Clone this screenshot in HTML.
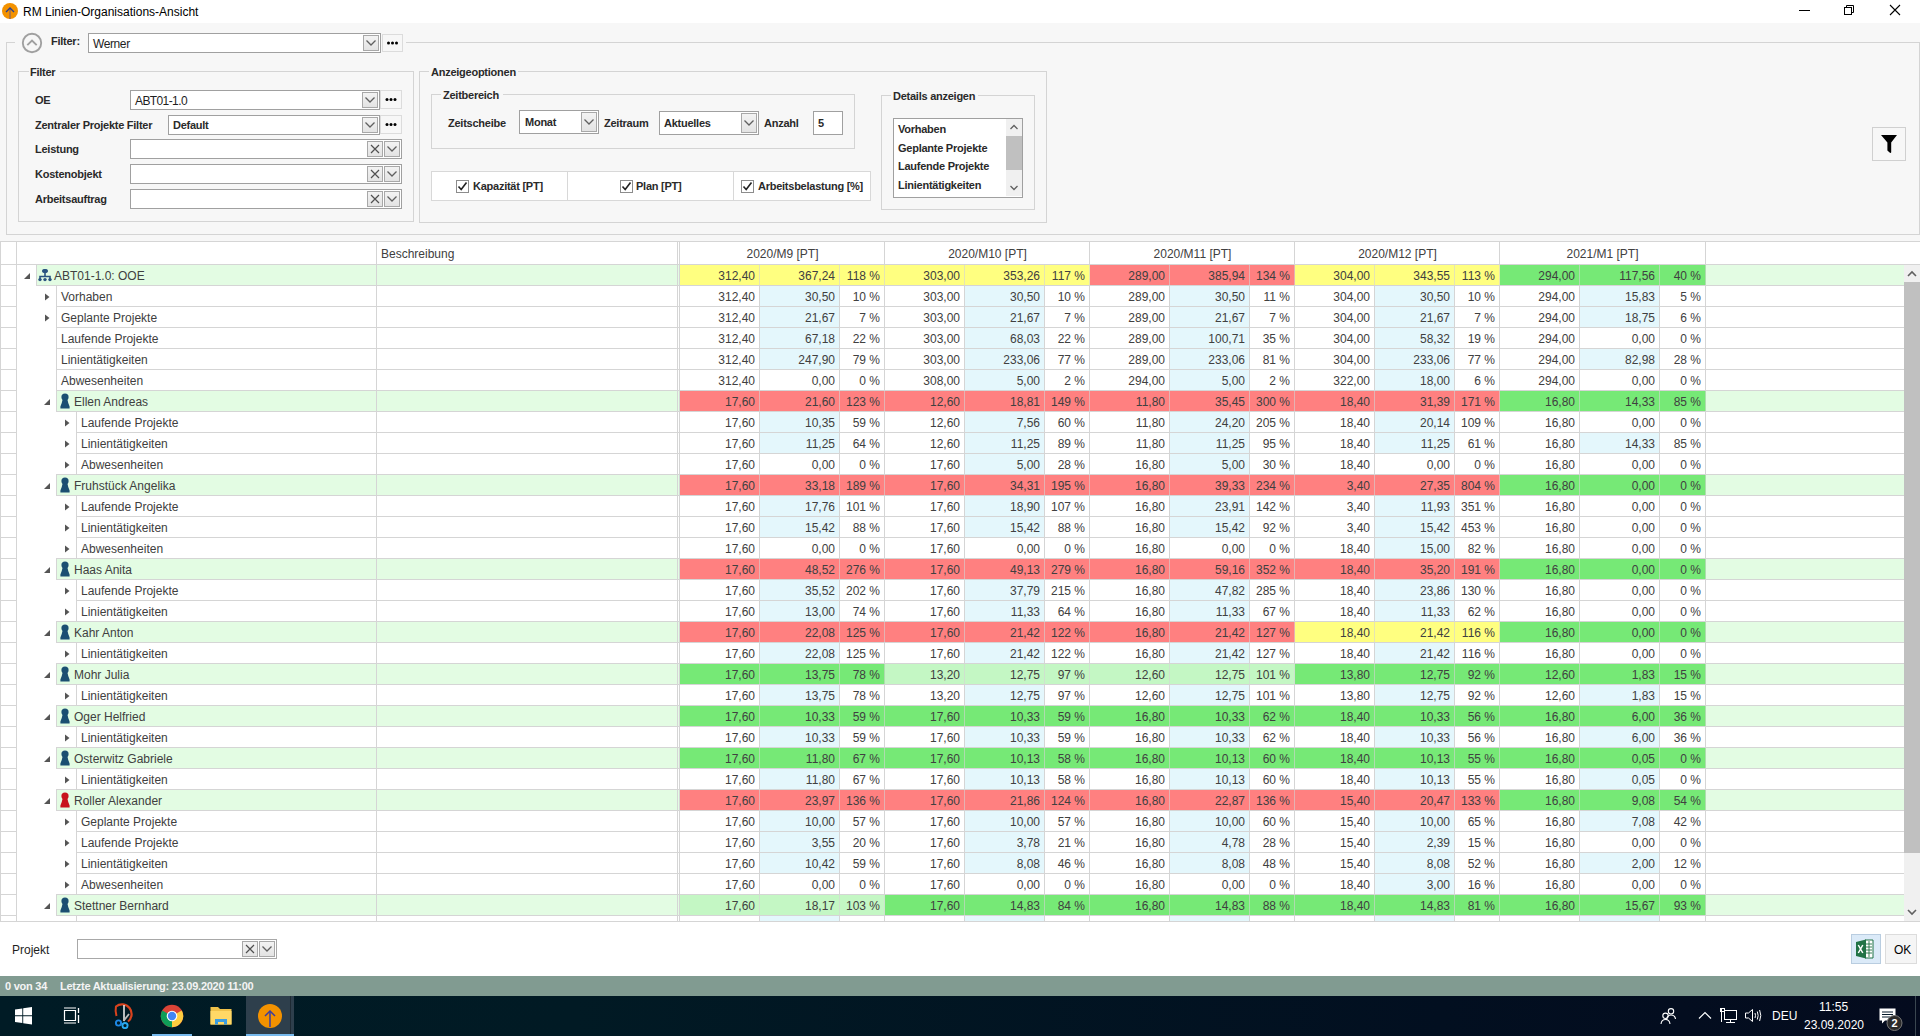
<!DOCTYPE html>
<html><head><meta charset="utf-8"><style>
html,body{margin:0;padding:0;width:1920px;height:1036px;overflow:hidden;background:#fff;}
body{position:relative;font-family:"Liberation Sans",sans-serif;}
div{position:absolute;}
.t{white-space:nowrap;}
</style></head><body>
<div style="left:0px;top:0px;width:1920px;height:23px;background:#fff"></div>
<svg style="position:absolute;left:2px;top:3px" width="16" height="16" viewBox="0 0 16 16"><circle cx="8" cy="8" r="8" fill="#f39200"/><path d="M8 5 L8 16" stroke="#b5763a" stroke-width="2"/><path d="M4 9 L8 5 L12 9" stroke="#2a3f8f" stroke-width="1.4" fill="none"/></svg>
<div class="t" style="left:23px;top:6px;font-size:12px;line-height:12px;color:#000;">RM Linien-Organisations-Ansicht</div>
<div style="left:1799px;top:10px;width:11px;height:1px;background:#000"></div>
<svg style="position:absolute;left:1843px;top:4px" width="13" height="12" viewBox="0 0 13 12"><rect x="1.5" y="3.5" width="7" height="7" fill="none" stroke="#000"/><path d="M3.5 3.5 V1.5 H10.5 V8.5 H8.5" fill="none" stroke="#000"/></svg>
<svg style="position:absolute;left:1889px;top:4px" width="13" height="13" viewBox="0 0 13 13"><path d="M1 1 L11 11 M11 1 L1 11" stroke="#000" stroke-width="1.1"/></svg>
<div style="left:0px;top:23px;width:1920px;height:218px;background:#f7f7f7"></div>
<div style="left:6px;top:42px;width:9px;height:1px;background:#d4d4d4"></div>
<div style="left:406px;top:42px;width:1514px;height:1px;background:#d4d4d4"></div>
<div style="left:6px;top:42px;width:1px;height:193px;background:#d4d4d4"></div>
<div style="left:1919px;top:42px;width:1px;height:193px;background:#d4d4d4"></div>
<div style="left:6px;top:234px;width:1914px;height:1px;background:#d4d4d4"></div>
<svg style="position:absolute;left:21px;top:32px" width="22" height="22" viewBox="0 0 22 22"><circle cx="11" cy="11" r="9.2" fill="none" stroke="#a0a0a0" stroke-width="1.9"/><path d="M6.3 13.2 L11 8.5 L15.7 13.2" fill="none" stroke="#a0a0a0" stroke-width="1.9"/></svg>
<div class="t" style="left:51px;top:36px;font-size:11px;line-height:11px;font-weight:bold;letter-spacing:-0.25px;color:#2a2a2a;">Filter:</div>
<div style="left:88px;top:33px;width:293px;height:20px;border:1px solid #a0a0a0;box-sizing:border-box;background:#fff;"></div>
<div style="left:363px;top:35px;width:16px;height:16px;border:1px solid #a8a8a8;box-sizing:border-box;background:linear-gradient(#f3f3f3,#e3e3e3);"></div>
<svg style="position:absolute;left:363px;top:35px" width="16" height="16" viewBox="0 0 16 16"><path d="M3.5 5.5 L8.0 10.0 L12.5 5.5" fill="none" stroke="#606060" stroke-width="1.3"/></svg>
<div class="t" style="left:93px;top:38px;font-size:12px;line-height:12px;color:#1e1e1e;letter-spacing:-0.4px;">Werner</div>
<div style="left:382px;top:34px;width:21px;height:18px;border:1px solid #dcdcdc;box-sizing:border-box;background:#f7f7f7;"></div>
<svg style="position:absolute;left:382px;top:34px" width="21" height="18" viewBox="0 0 21 18"><circle cx="6.5" cy="9.0" r="1.5" fill="#000"/><circle cx="10.5" cy="9.0" r="1.5" fill="#000"/><circle cx="14.5" cy="9.0" r="1.5" fill="#000"/></svg>
<div style="left:18px;top:71px;width:11px;height:1px;background:#d4d4d4"></div>
<div style="left:60px;top:71px;width:354px;height:1px;background:#d4d4d4"></div>
<div style="left:18px;top:71px;width:1px;height:151px;background:#d4d4d4"></div>
<div style="left:413px;top:71px;width:1px;height:151px;background:#d4d4d4"></div>
<div style="left:18px;top:221px;width:396px;height:1px;background:#d4d4d4"></div>
<div class="t" style="left:30px;top:67px;font-size:11px;line-height:11px;font-weight:bold;letter-spacing:-0.25px;color:#2a2a2a;">Filter</div>
<div class="t" style="left:35px;top:95px;font-size:11px;line-height:11px;font-weight:bold;letter-spacing:-0.25px;color:#2a2a2a;">OE</div>
<div class="t" style="left:35px;top:120px;font-size:11px;line-height:11px;font-weight:bold;letter-spacing:-0.25px;color:#2a2a2a;">Zentraler Projekte Filter</div>
<div class="t" style="left:35px;top:144px;font-size:11px;line-height:11px;font-weight:bold;letter-spacing:-0.25px;color:#2a2a2a;">Leistung</div>
<div class="t" style="left:35px;top:169px;font-size:11px;line-height:11px;font-weight:bold;letter-spacing:-0.25px;color:#2a2a2a;">Kostenobjekt</div>
<div class="t" style="left:35px;top:194px;font-size:11px;line-height:11px;font-weight:bold;letter-spacing:-0.25px;color:#2a2a2a;">Arbeitsauftrag</div>
<div style="left:130px;top:90px;width:250px;height:20px;border:1px solid #a0a0a0;box-sizing:border-box;background:#fff;"></div>
<div style="left:362px;top:92px;width:16px;height:16px;border:1px solid #a8a8a8;box-sizing:border-box;background:linear-gradient(#f3f3f3,#e3e3e3);"></div>
<svg style="position:absolute;left:362px;top:92px" width="16" height="16" viewBox="0 0 16 16"><path d="M3.5 5.5 L8.0 10.0 L12.5 5.5" fill="none" stroke="#606060" stroke-width="1.3"/></svg>
<div class="t" style="left:135px;top:95px;font-size:12px;line-height:12px;color:#1e1e1e;letter-spacing:-0.6px;">ABT01-1.0</div>
<div style="left:380px;top:90px;width:22px;height:19px;border:1px solid #dcdcdc;box-sizing:border-box;background:#f7f7f7;"></div>
<svg style="position:absolute;left:380px;top:90px" width="22" height="19" viewBox="0 0 22 19"><circle cx="7.0" cy="9.5" r="1.5" fill="#000"/><circle cx="11.0" cy="9.5" r="1.5" fill="#000"/><circle cx="15.0" cy="9.5" r="1.5" fill="#000"/></svg>
<div style="left:168px;top:115px;width:212px;height:20px;border:1px solid #a0a0a0;box-sizing:border-box;background:#fff;"></div>
<div style="left:362px;top:117px;width:16px;height:16px;border:1px solid #a8a8a8;box-sizing:border-box;background:linear-gradient(#f3f3f3,#e3e3e3);"></div>
<svg style="position:absolute;left:362px;top:117px" width="16" height="16" viewBox="0 0 16 16"><path d="M3.5 5.5 L8.0 10.0 L12.5 5.5" fill="none" stroke="#606060" stroke-width="1.3"/></svg>
<div class="t" style="left:173px;top:120px;font-size:11px;line-height:11px;font-weight:bold;letter-spacing:-0.25px;color:#2a2a2a;">Default</div>
<div style="left:380px;top:115px;width:22px;height:19px;border:1px solid #dcdcdc;box-sizing:border-box;background:#f7f7f7;"></div>
<svg style="position:absolute;left:380px;top:115px" width="22" height="19" viewBox="0 0 22 19"><circle cx="7.0" cy="9.5" r="1.5" fill="#000"/><circle cx="11.0" cy="9.5" r="1.5" fill="#000"/><circle cx="15.0" cy="9.5" r="1.5" fill="#000"/></svg>
<div style="left:130px;top:139px;width:272px;height:20px;border:1px solid #a0a0a0;box-sizing:border-box;background:#fff;"></div>
<div style="left:367px;top:141px;width:16px;height:16px;border:1px solid #a8a8a8;box-sizing:border-box;background:linear-gradient(#f3f3f3,#e3e3e3);"></div>
<svg style="position:absolute;left:367px;top:141px" width="16" height="16" viewBox="0 0 16 16"><path d="M4.0 4.0 L12.0 12.0 M12.0 4.0 L4.0 12.0" fill="none" stroke="#505050" stroke-width="1.2"/></svg>
<div style="left:384px;top:141px;width:16px;height:16px;border:1px solid #a8a8a8;box-sizing:border-box;background:linear-gradient(#f3f3f3,#e3e3e3);"></div>
<svg style="position:absolute;left:384px;top:141px" width="16" height="16" viewBox="0 0 16 16"><path d="M3.5 5.5 L8.0 10.0 L12.5 5.5" fill="none" stroke="#606060" stroke-width="1.3"/></svg>
<div style="left:130px;top:164px;width:272px;height:20px;border:1px solid #a0a0a0;box-sizing:border-box;background:#fff;"></div>
<div style="left:367px;top:166px;width:16px;height:16px;border:1px solid #a8a8a8;box-sizing:border-box;background:linear-gradient(#f3f3f3,#e3e3e3);"></div>
<svg style="position:absolute;left:367px;top:166px" width="16" height="16" viewBox="0 0 16 16"><path d="M4.0 4.0 L12.0 12.0 M12.0 4.0 L4.0 12.0" fill="none" stroke="#505050" stroke-width="1.2"/></svg>
<div style="left:384px;top:166px;width:16px;height:16px;border:1px solid #a8a8a8;box-sizing:border-box;background:linear-gradient(#f3f3f3,#e3e3e3);"></div>
<svg style="position:absolute;left:384px;top:166px" width="16" height="16" viewBox="0 0 16 16"><path d="M3.5 5.5 L8.0 10.0 L12.5 5.5" fill="none" stroke="#606060" stroke-width="1.3"/></svg>
<div style="left:130px;top:189px;width:272px;height:20px;border:1px solid #a0a0a0;box-sizing:border-box;background:#fff;"></div>
<div style="left:367px;top:191px;width:16px;height:16px;border:1px solid #a8a8a8;box-sizing:border-box;background:linear-gradient(#f3f3f3,#e3e3e3);"></div>
<svg style="position:absolute;left:367px;top:191px" width="16" height="16" viewBox="0 0 16 16"><path d="M4.0 4.0 L12.0 12.0 M12.0 4.0 L4.0 12.0" fill="none" stroke="#505050" stroke-width="1.2"/></svg>
<div style="left:384px;top:191px;width:16px;height:16px;border:1px solid #a8a8a8;box-sizing:border-box;background:linear-gradient(#f3f3f3,#e3e3e3);"></div>
<svg style="position:absolute;left:384px;top:191px" width="16" height="16" viewBox="0 0 16 16"><path d="M3.5 5.5 L8.0 10.0 L12.5 5.5" fill="none" stroke="#606060" stroke-width="1.3"/></svg>
<div style="left:419px;top:71px;width:10px;height:1px;background:#d4d4d4"></div>
<div style="left:518px;top:71px;width:529px;height:1px;background:#d4d4d4"></div>
<div style="left:419px;top:71px;width:1px;height:152px;background:#d4d4d4"></div>
<div style="left:1046px;top:71px;width:1px;height:152px;background:#d4d4d4"></div>
<div style="left:419px;top:222px;width:628px;height:1px;background:#d4d4d4"></div>
<div class="t" style="left:431px;top:67px;font-size:11px;line-height:11px;font-weight:bold;letter-spacing:-0.25px;color:#2a2a2a;">Anzeigeoptionen</div>
<div style="left:431px;top:94px;width:10px;height:1px;background:#d4d4d4"></div>
<div style="left:503px;top:94px;width:352px;height:1px;background:#d4d4d4"></div>
<div style="left:431px;top:94px;width:1px;height:55px;background:#d4d4d4"></div>
<div style="left:854px;top:94px;width:1px;height:55px;background:#d4d4d4"></div>
<div style="left:431px;top:148px;width:424px;height:1px;background:#d4d4d4"></div>
<div class="t" style="left:443px;top:90px;font-size:11px;line-height:11px;font-weight:bold;letter-spacing:-0.25px;color:#2a2a2a;">Zeitbereich</div>
<div class="t" style="left:448px;top:118px;font-size:11px;line-height:11px;font-weight:bold;letter-spacing:-0.25px;color:#2a2a2a;">Zeitscheibe</div>
<div style="left:519px;top:110px;width:80px;height:24px;border:1px solid #a0a0a0;box-sizing:border-box;background:#fff;"></div>
<div style="left:581px;top:112px;width:16px;height:20px;border:1px solid #a8a8a8;box-sizing:border-box;background:linear-gradient(#f3f3f3,#e3e3e3);"></div>
<svg style="position:absolute;left:581px;top:112px" width="16" height="20" viewBox="0 0 16 20"><path d="M3.5 7.5 L8.0 12.0 L12.5 7.5" fill="none" stroke="#606060" stroke-width="1.3"/></svg>
<div class="t" style="left:525px;top:117px;font-size:11px;line-height:11px;font-weight:bold;letter-spacing:-0.25px;color:#2a2a2a;">Monat</div>
<div class="t" style="left:604px;top:118px;font-size:11px;line-height:11px;font-weight:bold;letter-spacing:-0.25px;color:#2a2a2a;">Zeitraum</div>
<div style="left:659px;top:111px;width:100px;height:24px;border:1px solid #a0a0a0;box-sizing:border-box;background:#fff;"></div>
<div style="left:741px;top:113px;width:16px;height:20px;border:1px solid #a8a8a8;box-sizing:border-box;background:linear-gradient(#f3f3f3,#e3e3e3);"></div>
<svg style="position:absolute;left:741px;top:113px" width="16" height="20" viewBox="0 0 16 20"><path d="M3.5 7.5 L8.0 12.0 L12.5 7.5" fill="none" stroke="#606060" stroke-width="1.3"/></svg>
<div class="t" style="left:664px;top:118px;font-size:11px;line-height:11px;font-weight:bold;letter-spacing:-0.25px;color:#2a2a2a;">Aktuelles</div>
<div class="t" style="left:764px;top:118px;font-size:11px;line-height:11px;font-weight:bold;letter-spacing:-0.25px;color:#2a2a2a;">Anzahl</div>
<div style="left:813px;top:111px;width:30px;height:24px;border:1px solid #a0a0a0;box-sizing:border-box;background:#fff;"></div>
<div class="t" style="left:818px;top:118px;font-size:11px;line-height:11px;font-weight:bold;letter-spacing:-0.25px;color:#2a2a2a;">5</div>
<div style="left:431px;top:171px;width:440px;height:30px;border:1px solid #d8d8d8;box-sizing:border-box;background:#fff;"></div>
<div style="left:567px;top:172px;width:1px;height:28px;background:#d8d8d8"></div>
<div style="left:733px;top:172px;width:1px;height:28px;background:#d8d8d8"></div>
<div style="left:456px;top:180px;width:13px;height:13px;border:1px solid #8c8c8c;box-sizing:border-box;background:#fff;"></div>
<svg style="position:absolute;left:456px;top:180px" width="13" height="13" viewBox="0 0 13 13"><path d="M2.5 6.5 L5.2 9.5 L10.5 2.5" fill="none" stroke="#222" stroke-width="1.6"/></svg>
<div class="t" style="left:473px;top:181px;font-size:11px;line-height:11px;font-weight:bold;letter-spacing:-0.25px;color:#2a2a2a;">Kapazität [PT]</div>
<div style="left:620px;top:180px;width:13px;height:13px;border:1px solid #8c8c8c;box-sizing:border-box;background:#fff;"></div>
<svg style="position:absolute;left:620px;top:180px" width="13" height="13" viewBox="0 0 13 13"><path d="M2.5 6.5 L5.2 9.5 L10.5 2.5" fill="none" stroke="#222" stroke-width="1.6"/></svg>
<div class="t" style="left:636px;top:181px;font-size:11px;line-height:11px;font-weight:bold;letter-spacing:-0.25px;color:#2a2a2a;">Plan [PT]</div>
<div style="left:741px;top:180px;width:13px;height:13px;border:1px solid #8c8c8c;box-sizing:border-box;background:#fff;"></div>
<svg style="position:absolute;left:741px;top:180px" width="13" height="13" viewBox="0 0 13 13"><path d="M2.5 6.5 L5.2 9.5 L10.5 2.5" fill="none" stroke="#222" stroke-width="1.6"/></svg>
<div class="t" style="left:758px;top:181px;font-size:11px;line-height:11px;font-weight:bold;letter-spacing:-0.25px;color:#2a2a2a;">Arbeitsbelastung [%]</div>
<div style="left:881px;top:95px;width:10px;height:1px;background:#d4d4d4"></div>
<div style="left:978px;top:95px;width:57px;height:1px;background:#d4d4d4"></div>
<div style="left:881px;top:95px;width:1px;height:115px;background:#d4d4d4"></div>
<div style="left:1034px;top:95px;width:1px;height:115px;background:#d4d4d4"></div>
<div style="left:881px;top:209px;width:154px;height:1px;background:#d4d4d4"></div>
<div class="t" style="left:893px;top:91px;font-size:11px;line-height:11px;font-weight:bold;letter-spacing:-0.25px;color:#2a2a2a;">Details anzeigen</div>
<div style="left:893px;top:118px;width:130px;height:80px;border:1px solid #a0a0a0;box-sizing:border-box;background:#fff;"></div>
<div style="left:1006px;top:119px;width:16px;height:77px;background:#f0f0f0"></div>
<div style="left:1006px;top:136px;width:16px;height:34px;background:#c0c0c0"></div>
<svg style="position:absolute;left:1006px;top:119px" width="16" height="16" viewBox="0 0 16 16"><path d="M4.5 10 L8 6.5 L11.5 10" fill="none" stroke="#606060" stroke-width="1.3"/></svg>
<svg style="position:absolute;left:1006px;top:180px" width="16" height="16" viewBox="0 0 16 16"><path d="M4.5 6 L8 9.5 L11.5 6" fill="none" stroke="#606060" stroke-width="1.3"/></svg>
<div class="t" style="left:898px;top:124px;font-size:11px;line-height:11px;font-weight:bold;letter-spacing:-0.25px;color:#2a2a2a;">Vorhaben</div>
<div class="t" style="left:898px;top:143px;font-size:11px;line-height:11px;font-weight:bold;letter-spacing:-0.25px;color:#2a2a2a;">Geplante Projekte</div>
<div class="t" style="left:898px;top:161px;font-size:11px;line-height:11px;font-weight:bold;letter-spacing:-0.25px;color:#2a2a2a;">Laufende Projekte</div>
<div class="t" style="left:898px;top:180px;font-size:11px;line-height:11px;font-weight:bold;letter-spacing:-0.25px;color:#2a2a2a;">Linientätigkeiten</div>
<div style="left:1872px;top:127px;width:34px;height:34px;border:1px solid #d0d0d0;box-sizing:border-box;background:#f7f7f7;"></div>
<svg style="position:absolute;left:1872px;top:127px" width="34" height="34" viewBox="0 0 34 34"><path d="M9 8 H25 L19.2 15.5 V25 Q19.2 26.5 17.6 25.5 L15.4 23.5 V15.5 Z" fill="#000"/></svg>
<div style="left:0px;top:242px;width:1920px;height:679px;background:#fff"></div>
<div style="left:0px;top:241px;width:1920px;height:1px;background:#d5d5d5"></div>
<div style="left:0px;top:264px;width:1920px;height:1px;background:#d5d5d5"></div>
<div style="left:0px;top:921px;width:1920px;height:1px;background:#d5d5d5"></div>
<div style="left:36px;top:265px;width:1868px;height:20px;background:#e3fce3"></div>
<div style="left:0px;top:285px;width:16px;height:1px;background:#d5d5d5"></div>
<div style="left:36px;top:264px;width:1868px;height:1px;background:#d5d5d5"></div>
<div style="left:36px;top:285px;width:1868px;height:1px;background:#d5d5d5"></div>
<div style="left:36px;top:264px;width:1px;height:22px;background:#d5d5d5"></div>
<svg style="position:absolute;left:23px;top:272px" width="8" height="8" viewBox="0 0 8 8"><path d="M7 1 V7 H1 Z" fill="#555"/></svg>
<svg style="position:absolute;left:38px;top:269px" width="14" height="13" viewBox="0 0 14 13"><g fill="#2a5480" stroke="#2a5480"><rect x="4.5" y="0.5" width="5" height="3" rx="1.2"/><path d="M7 3 V7.5 M2 10 V7.5 H12 V10" fill="none" stroke-width="1.6"/><circle cx="2" cy="10.6" r="1.7" stroke="none"/><circle cx="7" cy="10.6" r="1.7" stroke="none"/><circle cx="12" cy="10.6" r="1.7" stroke="none"/></g></svg>
<div class="t" style="left:54px;top:270px;font-size:12px;line-height:12px;color:#404040;">ABT01-1.0: OOE</div>
<div style="left:680px;top:265px;width:205px;height:20px;background:#ffff80"></div>
<div class="t" style="left:685px;top:270px;width:70px;text-align:right;font-size:12px;line-height:12px;color:#404040;">312,40</div>
<div class="t" style="left:765px;top:270px;width:70px;text-align:right;font-size:12px;line-height:12px;color:#404040;">367,24</div>
<div class="t" style="left:836px;top:270px;width:44px;text-align:right;font-size:12px;line-height:12px;color:#404040;">118 %</div>
<div style="left:885px;top:265px;width:205px;height:20px;background:#ffff80"></div>
<div class="t" style="left:890px;top:270px;width:70px;text-align:right;font-size:12px;line-height:12px;color:#404040;">303,00</div>
<div class="t" style="left:970px;top:270px;width:70px;text-align:right;font-size:12px;line-height:12px;color:#404040;">353,26</div>
<div class="t" style="left:1041px;top:270px;width:44px;text-align:right;font-size:12px;line-height:12px;color:#404040;">117 %</div>
<div style="left:1090px;top:265px;width:205px;height:20px;background:#ff8080"></div>
<div class="t" style="left:1095px;top:270px;width:70px;text-align:right;font-size:12px;line-height:12px;color:#404040;">289,00</div>
<div class="t" style="left:1175px;top:270px;width:70px;text-align:right;font-size:12px;line-height:12px;color:#404040;">385,94</div>
<div class="t" style="left:1246px;top:270px;width:44px;text-align:right;font-size:12px;line-height:12px;color:#404040;">134 %</div>
<div style="left:1295px;top:265px;width:205px;height:20px;background:#ffff80"></div>
<div class="t" style="left:1300px;top:270px;width:70px;text-align:right;font-size:12px;line-height:12px;color:#404040;">304,00</div>
<div class="t" style="left:1380px;top:270px;width:70px;text-align:right;font-size:12px;line-height:12px;color:#404040;">343,55</div>
<div class="t" style="left:1451px;top:270px;width:44px;text-align:right;font-size:12px;line-height:12px;color:#404040;">113 %</div>
<div style="left:1500px;top:265px;width:206px;height:20px;background:#76e976"></div>
<div class="t" style="left:1505px;top:270px;width:70px;text-align:right;font-size:12px;line-height:12px;color:#404040;">294,00</div>
<div class="t" style="left:1585px;top:270px;width:70px;text-align:right;font-size:12px;line-height:12px;color:#404040;">117,56</div>
<div class="t" style="left:1657px;top:270px;width:44px;text-align:right;font-size:12px;line-height:12px;color:#404040;">40 %</div>
<div style="left:0px;top:306px;width:16px;height:1px;background:#d5d5d5"></div>
<div style="left:56px;top:285px;width:1848px;height:1px;background:#d5d5d5"></div>
<div style="left:56px;top:306px;width:1848px;height:1px;background:#d5d5d5"></div>
<div style="left:56px;top:285px;width:1px;height:22px;background:#d5d5d5"></div>
<svg style="position:absolute;left:45px;top:293px" width="6" height="9" viewBox="0 0 6 9"><path d="M0 0.5 L4.5 4 L0 7.5 Z" fill="#555"/></svg>
<div class="t" style="left:61px;top:291px;font-size:12px;line-height:12px;color:#404040;">Vorhaben</div>
<div style="left:760px;top:286px;width:79px;height:20px;background:#e4f7fc"></div>
<div class="t" style="left:685px;top:291px;width:70px;text-align:right;font-size:12px;line-height:12px;color:#404040;">312,40</div>
<div class="t" style="left:765px;top:291px;width:70px;text-align:right;font-size:12px;line-height:12px;color:#404040;">30,50</div>
<div class="t" style="left:836px;top:291px;width:44px;text-align:right;font-size:12px;line-height:12px;color:#404040;">10 %</div>
<div style="left:965px;top:286px;width:79px;height:20px;background:#e4f7fc"></div>
<div class="t" style="left:890px;top:291px;width:70px;text-align:right;font-size:12px;line-height:12px;color:#404040;">303,00</div>
<div class="t" style="left:970px;top:291px;width:70px;text-align:right;font-size:12px;line-height:12px;color:#404040;">30,50</div>
<div class="t" style="left:1041px;top:291px;width:44px;text-align:right;font-size:12px;line-height:12px;color:#404040;">10 %</div>
<div style="left:1170px;top:286px;width:79px;height:20px;background:#e4f7fc"></div>
<div class="t" style="left:1095px;top:291px;width:70px;text-align:right;font-size:12px;line-height:12px;color:#404040;">289,00</div>
<div class="t" style="left:1175px;top:291px;width:70px;text-align:right;font-size:12px;line-height:12px;color:#404040;">30,50</div>
<div class="t" style="left:1246px;top:291px;width:44px;text-align:right;font-size:12px;line-height:12px;color:#404040;">11 %</div>
<div style="left:1375px;top:286px;width:79px;height:20px;background:#e4f7fc"></div>
<div class="t" style="left:1300px;top:291px;width:70px;text-align:right;font-size:12px;line-height:12px;color:#404040;">304,00</div>
<div class="t" style="left:1380px;top:291px;width:70px;text-align:right;font-size:12px;line-height:12px;color:#404040;">30,50</div>
<div class="t" style="left:1451px;top:291px;width:44px;text-align:right;font-size:12px;line-height:12px;color:#404040;">10 %</div>
<div style="left:1580px;top:286px;width:79px;height:20px;background:#e4f7fc"></div>
<div class="t" style="left:1505px;top:291px;width:70px;text-align:right;font-size:12px;line-height:12px;color:#404040;">294,00</div>
<div class="t" style="left:1585px;top:291px;width:70px;text-align:right;font-size:12px;line-height:12px;color:#404040;">15,83</div>
<div class="t" style="left:1657px;top:291px;width:44px;text-align:right;font-size:12px;line-height:12px;color:#404040;">5 %</div>
<div style="left:0px;top:327px;width:16px;height:1px;background:#d5d5d5"></div>
<div style="left:56px;top:306px;width:1848px;height:1px;background:#d5d5d5"></div>
<div style="left:56px;top:327px;width:1848px;height:1px;background:#d5d5d5"></div>
<div style="left:56px;top:306px;width:1px;height:22px;background:#d5d5d5"></div>
<svg style="position:absolute;left:45px;top:314px" width="6" height="9" viewBox="0 0 6 9"><path d="M0 0.5 L4.5 4 L0 7.5 Z" fill="#555"/></svg>
<div class="t" style="left:61px;top:312px;font-size:12px;line-height:12px;color:#404040;">Geplante Projekte</div>
<div style="left:760px;top:307px;width:79px;height:20px;background:#e4f7fc"></div>
<div class="t" style="left:685px;top:312px;width:70px;text-align:right;font-size:12px;line-height:12px;color:#404040;">312,40</div>
<div class="t" style="left:765px;top:312px;width:70px;text-align:right;font-size:12px;line-height:12px;color:#404040;">21,67</div>
<div class="t" style="left:836px;top:312px;width:44px;text-align:right;font-size:12px;line-height:12px;color:#404040;">7 %</div>
<div style="left:965px;top:307px;width:79px;height:20px;background:#e4f7fc"></div>
<div class="t" style="left:890px;top:312px;width:70px;text-align:right;font-size:12px;line-height:12px;color:#404040;">303,00</div>
<div class="t" style="left:970px;top:312px;width:70px;text-align:right;font-size:12px;line-height:12px;color:#404040;">21,67</div>
<div class="t" style="left:1041px;top:312px;width:44px;text-align:right;font-size:12px;line-height:12px;color:#404040;">7 %</div>
<div style="left:1170px;top:307px;width:79px;height:20px;background:#e4f7fc"></div>
<div class="t" style="left:1095px;top:312px;width:70px;text-align:right;font-size:12px;line-height:12px;color:#404040;">289,00</div>
<div class="t" style="left:1175px;top:312px;width:70px;text-align:right;font-size:12px;line-height:12px;color:#404040;">21,67</div>
<div class="t" style="left:1246px;top:312px;width:44px;text-align:right;font-size:12px;line-height:12px;color:#404040;">7 %</div>
<div style="left:1375px;top:307px;width:79px;height:20px;background:#e4f7fc"></div>
<div class="t" style="left:1300px;top:312px;width:70px;text-align:right;font-size:12px;line-height:12px;color:#404040;">304,00</div>
<div class="t" style="left:1380px;top:312px;width:70px;text-align:right;font-size:12px;line-height:12px;color:#404040;">21,67</div>
<div class="t" style="left:1451px;top:312px;width:44px;text-align:right;font-size:12px;line-height:12px;color:#404040;">7 %</div>
<div style="left:1580px;top:307px;width:79px;height:20px;background:#e4f7fc"></div>
<div class="t" style="left:1505px;top:312px;width:70px;text-align:right;font-size:12px;line-height:12px;color:#404040;">294,00</div>
<div class="t" style="left:1585px;top:312px;width:70px;text-align:right;font-size:12px;line-height:12px;color:#404040;">18,75</div>
<div class="t" style="left:1657px;top:312px;width:44px;text-align:right;font-size:12px;line-height:12px;color:#404040;">6 %</div>
<div style="left:0px;top:348px;width:16px;height:1px;background:#d5d5d5"></div>
<div style="left:56px;top:327px;width:1848px;height:1px;background:#d5d5d5"></div>
<div style="left:56px;top:348px;width:1848px;height:1px;background:#d5d5d5"></div>
<div style="left:56px;top:327px;width:1px;height:22px;background:#d5d5d5"></div>
<div class="t" style="left:61px;top:333px;font-size:12px;line-height:12px;color:#404040;">Laufende Projekte</div>
<div style="left:760px;top:328px;width:79px;height:20px;background:#e4f7fc"></div>
<div class="t" style="left:685px;top:333px;width:70px;text-align:right;font-size:12px;line-height:12px;color:#404040;">312,40</div>
<div class="t" style="left:765px;top:333px;width:70px;text-align:right;font-size:12px;line-height:12px;color:#404040;">67,18</div>
<div class="t" style="left:836px;top:333px;width:44px;text-align:right;font-size:12px;line-height:12px;color:#404040;">22 %</div>
<div style="left:965px;top:328px;width:79px;height:20px;background:#e4f7fc"></div>
<div class="t" style="left:890px;top:333px;width:70px;text-align:right;font-size:12px;line-height:12px;color:#404040;">303,00</div>
<div class="t" style="left:970px;top:333px;width:70px;text-align:right;font-size:12px;line-height:12px;color:#404040;">68,03</div>
<div class="t" style="left:1041px;top:333px;width:44px;text-align:right;font-size:12px;line-height:12px;color:#404040;">22 %</div>
<div style="left:1170px;top:328px;width:79px;height:20px;background:#e4f7fc"></div>
<div class="t" style="left:1095px;top:333px;width:70px;text-align:right;font-size:12px;line-height:12px;color:#404040;">289,00</div>
<div class="t" style="left:1175px;top:333px;width:70px;text-align:right;font-size:12px;line-height:12px;color:#404040;">100,71</div>
<div class="t" style="left:1246px;top:333px;width:44px;text-align:right;font-size:12px;line-height:12px;color:#404040;">35 %</div>
<div style="left:1375px;top:328px;width:79px;height:20px;background:#e4f7fc"></div>
<div class="t" style="left:1300px;top:333px;width:70px;text-align:right;font-size:12px;line-height:12px;color:#404040;">304,00</div>
<div class="t" style="left:1380px;top:333px;width:70px;text-align:right;font-size:12px;line-height:12px;color:#404040;">58,32</div>
<div class="t" style="left:1451px;top:333px;width:44px;text-align:right;font-size:12px;line-height:12px;color:#404040;">19 %</div>
<div class="t" style="left:1505px;top:333px;width:70px;text-align:right;font-size:12px;line-height:12px;color:#404040;">294,00</div>
<div class="t" style="left:1585px;top:333px;width:70px;text-align:right;font-size:12px;line-height:12px;color:#404040;">0,00</div>
<div class="t" style="left:1657px;top:333px;width:44px;text-align:right;font-size:12px;line-height:12px;color:#404040;">0 %</div>
<div style="left:0px;top:369px;width:16px;height:1px;background:#d5d5d5"></div>
<div style="left:56px;top:348px;width:1848px;height:1px;background:#d5d5d5"></div>
<div style="left:56px;top:369px;width:1848px;height:1px;background:#d5d5d5"></div>
<div style="left:56px;top:348px;width:1px;height:22px;background:#d5d5d5"></div>
<div class="t" style="left:61px;top:354px;font-size:12px;line-height:12px;color:#404040;">Linientätigkeiten</div>
<div style="left:760px;top:349px;width:79px;height:20px;background:#e4f7fc"></div>
<div class="t" style="left:685px;top:354px;width:70px;text-align:right;font-size:12px;line-height:12px;color:#404040;">312,40</div>
<div class="t" style="left:765px;top:354px;width:70px;text-align:right;font-size:12px;line-height:12px;color:#404040;">247,90</div>
<div class="t" style="left:836px;top:354px;width:44px;text-align:right;font-size:12px;line-height:12px;color:#404040;">79 %</div>
<div style="left:965px;top:349px;width:79px;height:20px;background:#e4f7fc"></div>
<div class="t" style="left:890px;top:354px;width:70px;text-align:right;font-size:12px;line-height:12px;color:#404040;">303,00</div>
<div class="t" style="left:970px;top:354px;width:70px;text-align:right;font-size:12px;line-height:12px;color:#404040;">233,06</div>
<div class="t" style="left:1041px;top:354px;width:44px;text-align:right;font-size:12px;line-height:12px;color:#404040;">77 %</div>
<div style="left:1170px;top:349px;width:79px;height:20px;background:#e4f7fc"></div>
<div class="t" style="left:1095px;top:354px;width:70px;text-align:right;font-size:12px;line-height:12px;color:#404040;">289,00</div>
<div class="t" style="left:1175px;top:354px;width:70px;text-align:right;font-size:12px;line-height:12px;color:#404040;">233,06</div>
<div class="t" style="left:1246px;top:354px;width:44px;text-align:right;font-size:12px;line-height:12px;color:#404040;">81 %</div>
<div style="left:1375px;top:349px;width:79px;height:20px;background:#e4f7fc"></div>
<div class="t" style="left:1300px;top:354px;width:70px;text-align:right;font-size:12px;line-height:12px;color:#404040;">304,00</div>
<div class="t" style="left:1380px;top:354px;width:70px;text-align:right;font-size:12px;line-height:12px;color:#404040;">233,06</div>
<div class="t" style="left:1451px;top:354px;width:44px;text-align:right;font-size:12px;line-height:12px;color:#404040;">77 %</div>
<div style="left:1580px;top:349px;width:79px;height:20px;background:#e4f7fc"></div>
<div class="t" style="left:1505px;top:354px;width:70px;text-align:right;font-size:12px;line-height:12px;color:#404040;">294,00</div>
<div class="t" style="left:1585px;top:354px;width:70px;text-align:right;font-size:12px;line-height:12px;color:#404040;">82,98</div>
<div class="t" style="left:1657px;top:354px;width:44px;text-align:right;font-size:12px;line-height:12px;color:#404040;">28 %</div>
<div style="left:0px;top:390px;width:16px;height:1px;background:#d5d5d5"></div>
<div style="left:56px;top:369px;width:1848px;height:1px;background:#d5d5d5"></div>
<div style="left:56px;top:390px;width:1848px;height:1px;background:#d5d5d5"></div>
<div style="left:56px;top:369px;width:1px;height:22px;background:#d5d5d5"></div>
<div class="t" style="left:61px;top:375px;font-size:12px;line-height:12px;color:#404040;">Abwesenheiten</div>
<div class="t" style="left:685px;top:375px;width:70px;text-align:right;font-size:12px;line-height:12px;color:#404040;">312,40</div>
<div class="t" style="left:765px;top:375px;width:70px;text-align:right;font-size:12px;line-height:12px;color:#404040;">0,00</div>
<div class="t" style="left:836px;top:375px;width:44px;text-align:right;font-size:12px;line-height:12px;color:#404040;">0 %</div>
<div style="left:965px;top:370px;width:79px;height:20px;background:#e4f7fc"></div>
<div class="t" style="left:890px;top:375px;width:70px;text-align:right;font-size:12px;line-height:12px;color:#404040;">308,00</div>
<div class="t" style="left:970px;top:375px;width:70px;text-align:right;font-size:12px;line-height:12px;color:#404040;">5,00</div>
<div class="t" style="left:1041px;top:375px;width:44px;text-align:right;font-size:12px;line-height:12px;color:#404040;">2 %</div>
<div style="left:1170px;top:370px;width:79px;height:20px;background:#e4f7fc"></div>
<div class="t" style="left:1095px;top:375px;width:70px;text-align:right;font-size:12px;line-height:12px;color:#404040;">294,00</div>
<div class="t" style="left:1175px;top:375px;width:70px;text-align:right;font-size:12px;line-height:12px;color:#404040;">5,00</div>
<div class="t" style="left:1246px;top:375px;width:44px;text-align:right;font-size:12px;line-height:12px;color:#404040;">2 %</div>
<div style="left:1375px;top:370px;width:79px;height:20px;background:#e4f7fc"></div>
<div class="t" style="left:1300px;top:375px;width:70px;text-align:right;font-size:12px;line-height:12px;color:#404040;">322,00</div>
<div class="t" style="left:1380px;top:375px;width:70px;text-align:right;font-size:12px;line-height:12px;color:#404040;">18,00</div>
<div class="t" style="left:1451px;top:375px;width:44px;text-align:right;font-size:12px;line-height:12px;color:#404040;">6 %</div>
<div class="t" style="left:1505px;top:375px;width:70px;text-align:right;font-size:12px;line-height:12px;color:#404040;">294,00</div>
<div class="t" style="left:1585px;top:375px;width:70px;text-align:right;font-size:12px;line-height:12px;color:#404040;">0,00</div>
<div class="t" style="left:1657px;top:375px;width:44px;text-align:right;font-size:12px;line-height:12px;color:#404040;">0 %</div>
<div style="left:56px;top:391px;width:1848px;height:20px;background:#e3fce3"></div>
<div style="left:0px;top:411px;width:16px;height:1px;background:#d5d5d5"></div>
<div style="left:56px;top:390px;width:1848px;height:1px;background:#d5d5d5"></div>
<div style="left:56px;top:411px;width:1848px;height:1px;background:#d5d5d5"></div>
<div style="left:56px;top:390px;width:1px;height:22px;background:#d5d5d5"></div>
<svg style="position:absolute;left:43px;top:398px" width="8" height="8" viewBox="0 0 8 8"><path d="M7 1 V7 H1 Z" fill="#555"/></svg>
<svg style="position:absolute;left:60px;top:393px" width="10" height="16" viewBox="0 0 10 16"><circle cx="5" cy="4" r="3.6" fill="#1b4f72"/><path d="M2.6 6.5 H7.4 Q8 10 9.6 13.5 V15.5 H0.4 V13.5 Q2 10 2.6 6.5 Z" fill="#1b4f72"/></svg>
<div class="t" style="left:74px;top:396px;font-size:12px;line-height:12px;color:#404040;">Ellen Andreas</div>
<div style="left:680px;top:391px;width:205px;height:20px;background:#ff8080"></div>
<div class="t" style="left:685px;top:396px;width:70px;text-align:right;font-size:12px;line-height:12px;color:#404040;">17,60</div>
<div class="t" style="left:765px;top:396px;width:70px;text-align:right;font-size:12px;line-height:12px;color:#404040;">21,60</div>
<div class="t" style="left:836px;top:396px;width:44px;text-align:right;font-size:12px;line-height:12px;color:#404040;">123 %</div>
<div style="left:885px;top:391px;width:205px;height:20px;background:#ff8080"></div>
<div class="t" style="left:890px;top:396px;width:70px;text-align:right;font-size:12px;line-height:12px;color:#404040;">12,60</div>
<div class="t" style="left:970px;top:396px;width:70px;text-align:right;font-size:12px;line-height:12px;color:#404040;">18,81</div>
<div class="t" style="left:1041px;top:396px;width:44px;text-align:right;font-size:12px;line-height:12px;color:#404040;">149 %</div>
<div style="left:1090px;top:391px;width:205px;height:20px;background:#ff8080"></div>
<div class="t" style="left:1095px;top:396px;width:70px;text-align:right;font-size:12px;line-height:12px;color:#404040;">11,80</div>
<div class="t" style="left:1175px;top:396px;width:70px;text-align:right;font-size:12px;line-height:12px;color:#404040;">35,45</div>
<div class="t" style="left:1246px;top:396px;width:44px;text-align:right;font-size:12px;line-height:12px;color:#404040;">300 %</div>
<div style="left:1295px;top:391px;width:205px;height:20px;background:#ff8080"></div>
<div class="t" style="left:1300px;top:396px;width:70px;text-align:right;font-size:12px;line-height:12px;color:#404040;">18,40</div>
<div class="t" style="left:1380px;top:396px;width:70px;text-align:right;font-size:12px;line-height:12px;color:#404040;">31,39</div>
<div class="t" style="left:1451px;top:396px;width:44px;text-align:right;font-size:12px;line-height:12px;color:#404040;">171 %</div>
<div style="left:1500px;top:391px;width:206px;height:20px;background:#76e976"></div>
<div class="t" style="left:1505px;top:396px;width:70px;text-align:right;font-size:12px;line-height:12px;color:#404040;">16,80</div>
<div class="t" style="left:1585px;top:396px;width:70px;text-align:right;font-size:12px;line-height:12px;color:#404040;">14,33</div>
<div class="t" style="left:1657px;top:396px;width:44px;text-align:right;font-size:12px;line-height:12px;color:#404040;">85 %</div>
<div style="left:0px;top:432px;width:16px;height:1px;background:#d5d5d5"></div>
<div style="left:76px;top:411px;width:1828px;height:1px;background:#d5d5d5"></div>
<div style="left:76px;top:432px;width:1828px;height:1px;background:#d5d5d5"></div>
<div style="left:76px;top:411px;width:1px;height:22px;background:#d5d5d5"></div>
<svg style="position:absolute;left:65px;top:419px" width="6" height="9" viewBox="0 0 6 9"><path d="M0 0.5 L4.5 4 L0 7.5 Z" fill="#555"/></svg>
<div class="t" style="left:81px;top:417px;font-size:12px;line-height:12px;color:#404040;">Laufende Projekte</div>
<div style="left:760px;top:412px;width:79px;height:20px;background:#e4f7fc"></div>
<div class="t" style="left:685px;top:417px;width:70px;text-align:right;font-size:12px;line-height:12px;color:#404040;">17,60</div>
<div class="t" style="left:765px;top:417px;width:70px;text-align:right;font-size:12px;line-height:12px;color:#404040;">10,35</div>
<div class="t" style="left:836px;top:417px;width:44px;text-align:right;font-size:12px;line-height:12px;color:#404040;">59 %</div>
<div style="left:965px;top:412px;width:79px;height:20px;background:#e4f7fc"></div>
<div class="t" style="left:890px;top:417px;width:70px;text-align:right;font-size:12px;line-height:12px;color:#404040;">12,60</div>
<div class="t" style="left:970px;top:417px;width:70px;text-align:right;font-size:12px;line-height:12px;color:#404040;">7,56</div>
<div class="t" style="left:1041px;top:417px;width:44px;text-align:right;font-size:12px;line-height:12px;color:#404040;">60 %</div>
<div style="left:1170px;top:412px;width:79px;height:20px;background:#e4f7fc"></div>
<div class="t" style="left:1095px;top:417px;width:70px;text-align:right;font-size:12px;line-height:12px;color:#404040;">11,80</div>
<div class="t" style="left:1175px;top:417px;width:70px;text-align:right;font-size:12px;line-height:12px;color:#404040;">24,20</div>
<div class="t" style="left:1246px;top:417px;width:44px;text-align:right;font-size:12px;line-height:12px;color:#404040;">205 %</div>
<div style="left:1375px;top:412px;width:79px;height:20px;background:#e4f7fc"></div>
<div class="t" style="left:1300px;top:417px;width:70px;text-align:right;font-size:12px;line-height:12px;color:#404040;">18,40</div>
<div class="t" style="left:1380px;top:417px;width:70px;text-align:right;font-size:12px;line-height:12px;color:#404040;">20,14</div>
<div class="t" style="left:1451px;top:417px;width:44px;text-align:right;font-size:12px;line-height:12px;color:#404040;">109 %</div>
<div class="t" style="left:1505px;top:417px;width:70px;text-align:right;font-size:12px;line-height:12px;color:#404040;">16,80</div>
<div class="t" style="left:1585px;top:417px;width:70px;text-align:right;font-size:12px;line-height:12px;color:#404040;">0,00</div>
<div class="t" style="left:1657px;top:417px;width:44px;text-align:right;font-size:12px;line-height:12px;color:#404040;">0 %</div>
<div style="left:0px;top:453px;width:16px;height:1px;background:#d5d5d5"></div>
<div style="left:76px;top:432px;width:1828px;height:1px;background:#d5d5d5"></div>
<div style="left:76px;top:453px;width:1828px;height:1px;background:#d5d5d5"></div>
<div style="left:76px;top:432px;width:1px;height:22px;background:#d5d5d5"></div>
<svg style="position:absolute;left:65px;top:440px" width="6" height="9" viewBox="0 0 6 9"><path d="M0 0.5 L4.5 4 L0 7.5 Z" fill="#555"/></svg>
<div class="t" style="left:81px;top:438px;font-size:12px;line-height:12px;color:#404040;">Linientätigkeiten</div>
<div style="left:760px;top:433px;width:79px;height:20px;background:#e4f7fc"></div>
<div class="t" style="left:685px;top:438px;width:70px;text-align:right;font-size:12px;line-height:12px;color:#404040;">17,60</div>
<div class="t" style="left:765px;top:438px;width:70px;text-align:right;font-size:12px;line-height:12px;color:#404040;">11,25</div>
<div class="t" style="left:836px;top:438px;width:44px;text-align:right;font-size:12px;line-height:12px;color:#404040;">64 %</div>
<div style="left:965px;top:433px;width:79px;height:20px;background:#e4f7fc"></div>
<div class="t" style="left:890px;top:438px;width:70px;text-align:right;font-size:12px;line-height:12px;color:#404040;">12,60</div>
<div class="t" style="left:970px;top:438px;width:70px;text-align:right;font-size:12px;line-height:12px;color:#404040;">11,25</div>
<div class="t" style="left:1041px;top:438px;width:44px;text-align:right;font-size:12px;line-height:12px;color:#404040;">89 %</div>
<div style="left:1170px;top:433px;width:79px;height:20px;background:#e4f7fc"></div>
<div class="t" style="left:1095px;top:438px;width:70px;text-align:right;font-size:12px;line-height:12px;color:#404040;">11,80</div>
<div class="t" style="left:1175px;top:438px;width:70px;text-align:right;font-size:12px;line-height:12px;color:#404040;">11,25</div>
<div class="t" style="left:1246px;top:438px;width:44px;text-align:right;font-size:12px;line-height:12px;color:#404040;">95 %</div>
<div style="left:1375px;top:433px;width:79px;height:20px;background:#e4f7fc"></div>
<div class="t" style="left:1300px;top:438px;width:70px;text-align:right;font-size:12px;line-height:12px;color:#404040;">18,40</div>
<div class="t" style="left:1380px;top:438px;width:70px;text-align:right;font-size:12px;line-height:12px;color:#404040;">11,25</div>
<div class="t" style="left:1451px;top:438px;width:44px;text-align:right;font-size:12px;line-height:12px;color:#404040;">61 %</div>
<div style="left:1580px;top:433px;width:79px;height:20px;background:#e4f7fc"></div>
<div class="t" style="left:1505px;top:438px;width:70px;text-align:right;font-size:12px;line-height:12px;color:#404040;">16,80</div>
<div class="t" style="left:1585px;top:438px;width:70px;text-align:right;font-size:12px;line-height:12px;color:#404040;">14,33</div>
<div class="t" style="left:1657px;top:438px;width:44px;text-align:right;font-size:12px;line-height:12px;color:#404040;">85 %</div>
<div style="left:0px;top:474px;width:16px;height:1px;background:#d5d5d5"></div>
<div style="left:76px;top:453px;width:1828px;height:1px;background:#d5d5d5"></div>
<div style="left:76px;top:474px;width:1828px;height:1px;background:#d5d5d5"></div>
<div style="left:76px;top:453px;width:1px;height:22px;background:#d5d5d5"></div>
<svg style="position:absolute;left:65px;top:461px" width="6" height="9" viewBox="0 0 6 9"><path d="M0 0.5 L4.5 4 L0 7.5 Z" fill="#555"/></svg>
<div class="t" style="left:81px;top:459px;font-size:12px;line-height:12px;color:#404040;">Abwesenheiten</div>
<div class="t" style="left:685px;top:459px;width:70px;text-align:right;font-size:12px;line-height:12px;color:#404040;">17,60</div>
<div class="t" style="left:765px;top:459px;width:70px;text-align:right;font-size:12px;line-height:12px;color:#404040;">0,00</div>
<div class="t" style="left:836px;top:459px;width:44px;text-align:right;font-size:12px;line-height:12px;color:#404040;">0 %</div>
<div style="left:965px;top:454px;width:79px;height:20px;background:#e4f7fc"></div>
<div class="t" style="left:890px;top:459px;width:70px;text-align:right;font-size:12px;line-height:12px;color:#404040;">17,60</div>
<div class="t" style="left:970px;top:459px;width:70px;text-align:right;font-size:12px;line-height:12px;color:#404040;">5,00</div>
<div class="t" style="left:1041px;top:459px;width:44px;text-align:right;font-size:12px;line-height:12px;color:#404040;">28 %</div>
<div style="left:1170px;top:454px;width:79px;height:20px;background:#e4f7fc"></div>
<div class="t" style="left:1095px;top:459px;width:70px;text-align:right;font-size:12px;line-height:12px;color:#404040;">16,80</div>
<div class="t" style="left:1175px;top:459px;width:70px;text-align:right;font-size:12px;line-height:12px;color:#404040;">5,00</div>
<div class="t" style="left:1246px;top:459px;width:44px;text-align:right;font-size:12px;line-height:12px;color:#404040;">30 %</div>
<div class="t" style="left:1300px;top:459px;width:70px;text-align:right;font-size:12px;line-height:12px;color:#404040;">18,40</div>
<div class="t" style="left:1380px;top:459px;width:70px;text-align:right;font-size:12px;line-height:12px;color:#404040;">0,00</div>
<div class="t" style="left:1451px;top:459px;width:44px;text-align:right;font-size:12px;line-height:12px;color:#404040;">0 %</div>
<div class="t" style="left:1505px;top:459px;width:70px;text-align:right;font-size:12px;line-height:12px;color:#404040;">16,80</div>
<div class="t" style="left:1585px;top:459px;width:70px;text-align:right;font-size:12px;line-height:12px;color:#404040;">0,00</div>
<div class="t" style="left:1657px;top:459px;width:44px;text-align:right;font-size:12px;line-height:12px;color:#404040;">0 %</div>
<div style="left:56px;top:475px;width:1848px;height:20px;background:#e3fce3"></div>
<div style="left:0px;top:495px;width:16px;height:1px;background:#d5d5d5"></div>
<div style="left:56px;top:474px;width:1848px;height:1px;background:#d5d5d5"></div>
<div style="left:56px;top:495px;width:1848px;height:1px;background:#d5d5d5"></div>
<div style="left:56px;top:474px;width:1px;height:22px;background:#d5d5d5"></div>
<svg style="position:absolute;left:43px;top:482px" width="8" height="8" viewBox="0 0 8 8"><path d="M7 1 V7 H1 Z" fill="#555"/></svg>
<svg style="position:absolute;left:60px;top:477px" width="10" height="16" viewBox="0 0 10 16"><circle cx="5" cy="4" r="3.6" fill="#1b4f72"/><path d="M2.6 6.5 H7.4 Q8 10 9.6 13.5 V15.5 H0.4 V13.5 Q2 10 2.6 6.5 Z" fill="#1b4f72"/></svg>
<div class="t" style="left:74px;top:480px;font-size:12px;line-height:12px;color:#404040;">Fruhstück Angelika</div>
<div style="left:680px;top:475px;width:205px;height:20px;background:#ff8080"></div>
<div class="t" style="left:685px;top:480px;width:70px;text-align:right;font-size:12px;line-height:12px;color:#404040;">17,60</div>
<div class="t" style="left:765px;top:480px;width:70px;text-align:right;font-size:12px;line-height:12px;color:#404040;">33,18</div>
<div class="t" style="left:836px;top:480px;width:44px;text-align:right;font-size:12px;line-height:12px;color:#404040;">189 %</div>
<div style="left:885px;top:475px;width:205px;height:20px;background:#ff8080"></div>
<div class="t" style="left:890px;top:480px;width:70px;text-align:right;font-size:12px;line-height:12px;color:#404040;">17,60</div>
<div class="t" style="left:970px;top:480px;width:70px;text-align:right;font-size:12px;line-height:12px;color:#404040;">34,31</div>
<div class="t" style="left:1041px;top:480px;width:44px;text-align:right;font-size:12px;line-height:12px;color:#404040;">195 %</div>
<div style="left:1090px;top:475px;width:205px;height:20px;background:#ff8080"></div>
<div class="t" style="left:1095px;top:480px;width:70px;text-align:right;font-size:12px;line-height:12px;color:#404040;">16,80</div>
<div class="t" style="left:1175px;top:480px;width:70px;text-align:right;font-size:12px;line-height:12px;color:#404040;">39,33</div>
<div class="t" style="left:1246px;top:480px;width:44px;text-align:right;font-size:12px;line-height:12px;color:#404040;">234 %</div>
<div style="left:1295px;top:475px;width:205px;height:20px;background:#ff8080"></div>
<div class="t" style="left:1300px;top:480px;width:70px;text-align:right;font-size:12px;line-height:12px;color:#404040;">3,40</div>
<div class="t" style="left:1380px;top:480px;width:70px;text-align:right;font-size:12px;line-height:12px;color:#404040;">27,35</div>
<div class="t" style="left:1451px;top:480px;width:44px;text-align:right;font-size:12px;line-height:12px;color:#404040;">804 %</div>
<div style="left:1500px;top:475px;width:206px;height:20px;background:#76e976"></div>
<div class="t" style="left:1505px;top:480px;width:70px;text-align:right;font-size:12px;line-height:12px;color:#404040;">16,80</div>
<div class="t" style="left:1585px;top:480px;width:70px;text-align:right;font-size:12px;line-height:12px;color:#404040;">0,00</div>
<div class="t" style="left:1657px;top:480px;width:44px;text-align:right;font-size:12px;line-height:12px;color:#404040;">0 %</div>
<div style="left:0px;top:516px;width:16px;height:1px;background:#d5d5d5"></div>
<div style="left:76px;top:495px;width:1828px;height:1px;background:#d5d5d5"></div>
<div style="left:76px;top:516px;width:1828px;height:1px;background:#d5d5d5"></div>
<div style="left:76px;top:495px;width:1px;height:22px;background:#d5d5d5"></div>
<svg style="position:absolute;left:65px;top:503px" width="6" height="9" viewBox="0 0 6 9"><path d="M0 0.5 L4.5 4 L0 7.5 Z" fill="#555"/></svg>
<div class="t" style="left:81px;top:501px;font-size:12px;line-height:12px;color:#404040;">Laufende Projekte</div>
<div style="left:760px;top:496px;width:79px;height:20px;background:#e4f7fc"></div>
<div class="t" style="left:685px;top:501px;width:70px;text-align:right;font-size:12px;line-height:12px;color:#404040;">17,60</div>
<div class="t" style="left:765px;top:501px;width:70px;text-align:right;font-size:12px;line-height:12px;color:#404040;">17,76</div>
<div class="t" style="left:836px;top:501px;width:44px;text-align:right;font-size:12px;line-height:12px;color:#404040;">101 %</div>
<div style="left:965px;top:496px;width:79px;height:20px;background:#e4f7fc"></div>
<div class="t" style="left:890px;top:501px;width:70px;text-align:right;font-size:12px;line-height:12px;color:#404040;">17,60</div>
<div class="t" style="left:970px;top:501px;width:70px;text-align:right;font-size:12px;line-height:12px;color:#404040;">18,90</div>
<div class="t" style="left:1041px;top:501px;width:44px;text-align:right;font-size:12px;line-height:12px;color:#404040;">107 %</div>
<div style="left:1170px;top:496px;width:79px;height:20px;background:#e4f7fc"></div>
<div class="t" style="left:1095px;top:501px;width:70px;text-align:right;font-size:12px;line-height:12px;color:#404040;">16,80</div>
<div class="t" style="left:1175px;top:501px;width:70px;text-align:right;font-size:12px;line-height:12px;color:#404040;">23,91</div>
<div class="t" style="left:1246px;top:501px;width:44px;text-align:right;font-size:12px;line-height:12px;color:#404040;">142 %</div>
<div style="left:1375px;top:496px;width:79px;height:20px;background:#e4f7fc"></div>
<div class="t" style="left:1300px;top:501px;width:70px;text-align:right;font-size:12px;line-height:12px;color:#404040;">3,40</div>
<div class="t" style="left:1380px;top:501px;width:70px;text-align:right;font-size:12px;line-height:12px;color:#404040;">11,93</div>
<div class="t" style="left:1451px;top:501px;width:44px;text-align:right;font-size:12px;line-height:12px;color:#404040;">351 %</div>
<div class="t" style="left:1505px;top:501px;width:70px;text-align:right;font-size:12px;line-height:12px;color:#404040;">16,80</div>
<div class="t" style="left:1585px;top:501px;width:70px;text-align:right;font-size:12px;line-height:12px;color:#404040;">0,00</div>
<div class="t" style="left:1657px;top:501px;width:44px;text-align:right;font-size:12px;line-height:12px;color:#404040;">0 %</div>
<div style="left:0px;top:537px;width:16px;height:1px;background:#d5d5d5"></div>
<div style="left:76px;top:516px;width:1828px;height:1px;background:#d5d5d5"></div>
<div style="left:76px;top:537px;width:1828px;height:1px;background:#d5d5d5"></div>
<div style="left:76px;top:516px;width:1px;height:22px;background:#d5d5d5"></div>
<svg style="position:absolute;left:65px;top:524px" width="6" height="9" viewBox="0 0 6 9"><path d="M0 0.5 L4.5 4 L0 7.5 Z" fill="#555"/></svg>
<div class="t" style="left:81px;top:522px;font-size:12px;line-height:12px;color:#404040;">Linientätigkeiten</div>
<div style="left:760px;top:517px;width:79px;height:20px;background:#e4f7fc"></div>
<div class="t" style="left:685px;top:522px;width:70px;text-align:right;font-size:12px;line-height:12px;color:#404040;">17,60</div>
<div class="t" style="left:765px;top:522px;width:70px;text-align:right;font-size:12px;line-height:12px;color:#404040;">15,42</div>
<div class="t" style="left:836px;top:522px;width:44px;text-align:right;font-size:12px;line-height:12px;color:#404040;">88 %</div>
<div style="left:965px;top:517px;width:79px;height:20px;background:#e4f7fc"></div>
<div class="t" style="left:890px;top:522px;width:70px;text-align:right;font-size:12px;line-height:12px;color:#404040;">17,60</div>
<div class="t" style="left:970px;top:522px;width:70px;text-align:right;font-size:12px;line-height:12px;color:#404040;">15,42</div>
<div class="t" style="left:1041px;top:522px;width:44px;text-align:right;font-size:12px;line-height:12px;color:#404040;">88 %</div>
<div style="left:1170px;top:517px;width:79px;height:20px;background:#e4f7fc"></div>
<div class="t" style="left:1095px;top:522px;width:70px;text-align:right;font-size:12px;line-height:12px;color:#404040;">16,80</div>
<div class="t" style="left:1175px;top:522px;width:70px;text-align:right;font-size:12px;line-height:12px;color:#404040;">15,42</div>
<div class="t" style="left:1246px;top:522px;width:44px;text-align:right;font-size:12px;line-height:12px;color:#404040;">92 %</div>
<div style="left:1375px;top:517px;width:79px;height:20px;background:#e4f7fc"></div>
<div class="t" style="left:1300px;top:522px;width:70px;text-align:right;font-size:12px;line-height:12px;color:#404040;">3,40</div>
<div class="t" style="left:1380px;top:522px;width:70px;text-align:right;font-size:12px;line-height:12px;color:#404040;">15,42</div>
<div class="t" style="left:1451px;top:522px;width:44px;text-align:right;font-size:12px;line-height:12px;color:#404040;">453 %</div>
<div class="t" style="left:1505px;top:522px;width:70px;text-align:right;font-size:12px;line-height:12px;color:#404040;">16,80</div>
<div class="t" style="left:1585px;top:522px;width:70px;text-align:right;font-size:12px;line-height:12px;color:#404040;">0,00</div>
<div class="t" style="left:1657px;top:522px;width:44px;text-align:right;font-size:12px;line-height:12px;color:#404040;">0 %</div>
<div style="left:0px;top:558px;width:16px;height:1px;background:#d5d5d5"></div>
<div style="left:76px;top:537px;width:1828px;height:1px;background:#d5d5d5"></div>
<div style="left:76px;top:558px;width:1828px;height:1px;background:#d5d5d5"></div>
<div style="left:76px;top:537px;width:1px;height:22px;background:#d5d5d5"></div>
<svg style="position:absolute;left:65px;top:545px" width="6" height="9" viewBox="0 0 6 9"><path d="M0 0.5 L4.5 4 L0 7.5 Z" fill="#555"/></svg>
<div class="t" style="left:81px;top:543px;font-size:12px;line-height:12px;color:#404040;">Abwesenheiten</div>
<div class="t" style="left:685px;top:543px;width:70px;text-align:right;font-size:12px;line-height:12px;color:#404040;">17,60</div>
<div class="t" style="left:765px;top:543px;width:70px;text-align:right;font-size:12px;line-height:12px;color:#404040;">0,00</div>
<div class="t" style="left:836px;top:543px;width:44px;text-align:right;font-size:12px;line-height:12px;color:#404040;">0 %</div>
<div class="t" style="left:890px;top:543px;width:70px;text-align:right;font-size:12px;line-height:12px;color:#404040;">17,60</div>
<div class="t" style="left:970px;top:543px;width:70px;text-align:right;font-size:12px;line-height:12px;color:#404040;">0,00</div>
<div class="t" style="left:1041px;top:543px;width:44px;text-align:right;font-size:12px;line-height:12px;color:#404040;">0 %</div>
<div class="t" style="left:1095px;top:543px;width:70px;text-align:right;font-size:12px;line-height:12px;color:#404040;">16,80</div>
<div class="t" style="left:1175px;top:543px;width:70px;text-align:right;font-size:12px;line-height:12px;color:#404040;">0,00</div>
<div class="t" style="left:1246px;top:543px;width:44px;text-align:right;font-size:12px;line-height:12px;color:#404040;">0 %</div>
<div style="left:1375px;top:538px;width:79px;height:20px;background:#e4f7fc"></div>
<div class="t" style="left:1300px;top:543px;width:70px;text-align:right;font-size:12px;line-height:12px;color:#404040;">18,40</div>
<div class="t" style="left:1380px;top:543px;width:70px;text-align:right;font-size:12px;line-height:12px;color:#404040;">15,00</div>
<div class="t" style="left:1451px;top:543px;width:44px;text-align:right;font-size:12px;line-height:12px;color:#404040;">82 %</div>
<div class="t" style="left:1505px;top:543px;width:70px;text-align:right;font-size:12px;line-height:12px;color:#404040;">16,80</div>
<div class="t" style="left:1585px;top:543px;width:70px;text-align:right;font-size:12px;line-height:12px;color:#404040;">0,00</div>
<div class="t" style="left:1657px;top:543px;width:44px;text-align:right;font-size:12px;line-height:12px;color:#404040;">0 %</div>
<div style="left:56px;top:559px;width:1848px;height:20px;background:#e3fce3"></div>
<div style="left:0px;top:579px;width:16px;height:1px;background:#d5d5d5"></div>
<div style="left:56px;top:558px;width:1848px;height:1px;background:#d5d5d5"></div>
<div style="left:56px;top:579px;width:1848px;height:1px;background:#d5d5d5"></div>
<div style="left:56px;top:558px;width:1px;height:22px;background:#d5d5d5"></div>
<svg style="position:absolute;left:43px;top:566px" width="8" height="8" viewBox="0 0 8 8"><path d="M7 1 V7 H1 Z" fill="#555"/></svg>
<svg style="position:absolute;left:60px;top:561px" width="10" height="16" viewBox="0 0 10 16"><circle cx="5" cy="4" r="3.6" fill="#1b4f72"/><path d="M2.6 6.5 H7.4 Q8 10 9.6 13.5 V15.5 H0.4 V13.5 Q2 10 2.6 6.5 Z" fill="#1b4f72"/></svg>
<div class="t" style="left:74px;top:564px;font-size:12px;line-height:12px;color:#404040;">Haas Anita</div>
<div style="left:680px;top:559px;width:205px;height:20px;background:#ff8080"></div>
<div class="t" style="left:685px;top:564px;width:70px;text-align:right;font-size:12px;line-height:12px;color:#404040;">17,60</div>
<div class="t" style="left:765px;top:564px;width:70px;text-align:right;font-size:12px;line-height:12px;color:#404040;">48,52</div>
<div class="t" style="left:836px;top:564px;width:44px;text-align:right;font-size:12px;line-height:12px;color:#404040;">276 %</div>
<div style="left:885px;top:559px;width:205px;height:20px;background:#ff8080"></div>
<div class="t" style="left:890px;top:564px;width:70px;text-align:right;font-size:12px;line-height:12px;color:#404040;">17,60</div>
<div class="t" style="left:970px;top:564px;width:70px;text-align:right;font-size:12px;line-height:12px;color:#404040;">49,13</div>
<div class="t" style="left:1041px;top:564px;width:44px;text-align:right;font-size:12px;line-height:12px;color:#404040;">279 %</div>
<div style="left:1090px;top:559px;width:205px;height:20px;background:#ff8080"></div>
<div class="t" style="left:1095px;top:564px;width:70px;text-align:right;font-size:12px;line-height:12px;color:#404040;">16,80</div>
<div class="t" style="left:1175px;top:564px;width:70px;text-align:right;font-size:12px;line-height:12px;color:#404040;">59,16</div>
<div class="t" style="left:1246px;top:564px;width:44px;text-align:right;font-size:12px;line-height:12px;color:#404040;">352 %</div>
<div style="left:1295px;top:559px;width:205px;height:20px;background:#ff8080"></div>
<div class="t" style="left:1300px;top:564px;width:70px;text-align:right;font-size:12px;line-height:12px;color:#404040;">18,40</div>
<div class="t" style="left:1380px;top:564px;width:70px;text-align:right;font-size:12px;line-height:12px;color:#404040;">35,20</div>
<div class="t" style="left:1451px;top:564px;width:44px;text-align:right;font-size:12px;line-height:12px;color:#404040;">191 %</div>
<div style="left:1500px;top:559px;width:206px;height:20px;background:#76e976"></div>
<div class="t" style="left:1505px;top:564px;width:70px;text-align:right;font-size:12px;line-height:12px;color:#404040;">16,80</div>
<div class="t" style="left:1585px;top:564px;width:70px;text-align:right;font-size:12px;line-height:12px;color:#404040;">0,00</div>
<div class="t" style="left:1657px;top:564px;width:44px;text-align:right;font-size:12px;line-height:12px;color:#404040;">0 %</div>
<div style="left:0px;top:600px;width:16px;height:1px;background:#d5d5d5"></div>
<div style="left:76px;top:579px;width:1828px;height:1px;background:#d5d5d5"></div>
<div style="left:76px;top:600px;width:1828px;height:1px;background:#d5d5d5"></div>
<div style="left:76px;top:579px;width:1px;height:22px;background:#d5d5d5"></div>
<svg style="position:absolute;left:65px;top:587px" width="6" height="9" viewBox="0 0 6 9"><path d="M0 0.5 L4.5 4 L0 7.5 Z" fill="#555"/></svg>
<div class="t" style="left:81px;top:585px;font-size:12px;line-height:12px;color:#404040;">Laufende Projekte</div>
<div style="left:760px;top:580px;width:79px;height:20px;background:#e4f7fc"></div>
<div class="t" style="left:685px;top:585px;width:70px;text-align:right;font-size:12px;line-height:12px;color:#404040;">17,60</div>
<div class="t" style="left:765px;top:585px;width:70px;text-align:right;font-size:12px;line-height:12px;color:#404040;">35,52</div>
<div class="t" style="left:836px;top:585px;width:44px;text-align:right;font-size:12px;line-height:12px;color:#404040;">202 %</div>
<div style="left:965px;top:580px;width:79px;height:20px;background:#e4f7fc"></div>
<div class="t" style="left:890px;top:585px;width:70px;text-align:right;font-size:12px;line-height:12px;color:#404040;">17,60</div>
<div class="t" style="left:970px;top:585px;width:70px;text-align:right;font-size:12px;line-height:12px;color:#404040;">37,79</div>
<div class="t" style="left:1041px;top:585px;width:44px;text-align:right;font-size:12px;line-height:12px;color:#404040;">215 %</div>
<div style="left:1170px;top:580px;width:79px;height:20px;background:#e4f7fc"></div>
<div class="t" style="left:1095px;top:585px;width:70px;text-align:right;font-size:12px;line-height:12px;color:#404040;">16,80</div>
<div class="t" style="left:1175px;top:585px;width:70px;text-align:right;font-size:12px;line-height:12px;color:#404040;">47,82</div>
<div class="t" style="left:1246px;top:585px;width:44px;text-align:right;font-size:12px;line-height:12px;color:#404040;">285 %</div>
<div style="left:1375px;top:580px;width:79px;height:20px;background:#e4f7fc"></div>
<div class="t" style="left:1300px;top:585px;width:70px;text-align:right;font-size:12px;line-height:12px;color:#404040;">18,40</div>
<div class="t" style="left:1380px;top:585px;width:70px;text-align:right;font-size:12px;line-height:12px;color:#404040;">23,86</div>
<div class="t" style="left:1451px;top:585px;width:44px;text-align:right;font-size:12px;line-height:12px;color:#404040;">130 %</div>
<div class="t" style="left:1505px;top:585px;width:70px;text-align:right;font-size:12px;line-height:12px;color:#404040;">16,80</div>
<div class="t" style="left:1585px;top:585px;width:70px;text-align:right;font-size:12px;line-height:12px;color:#404040;">0,00</div>
<div class="t" style="left:1657px;top:585px;width:44px;text-align:right;font-size:12px;line-height:12px;color:#404040;">0 %</div>
<div style="left:0px;top:621px;width:16px;height:1px;background:#d5d5d5"></div>
<div style="left:76px;top:600px;width:1828px;height:1px;background:#d5d5d5"></div>
<div style="left:76px;top:621px;width:1828px;height:1px;background:#d5d5d5"></div>
<div style="left:76px;top:600px;width:1px;height:22px;background:#d5d5d5"></div>
<svg style="position:absolute;left:65px;top:608px" width="6" height="9" viewBox="0 0 6 9"><path d="M0 0.5 L4.5 4 L0 7.5 Z" fill="#555"/></svg>
<div class="t" style="left:81px;top:606px;font-size:12px;line-height:12px;color:#404040;">Linientätigkeiten</div>
<div style="left:760px;top:601px;width:79px;height:20px;background:#e4f7fc"></div>
<div class="t" style="left:685px;top:606px;width:70px;text-align:right;font-size:12px;line-height:12px;color:#404040;">17,60</div>
<div class="t" style="left:765px;top:606px;width:70px;text-align:right;font-size:12px;line-height:12px;color:#404040;">13,00</div>
<div class="t" style="left:836px;top:606px;width:44px;text-align:right;font-size:12px;line-height:12px;color:#404040;">74 %</div>
<div style="left:965px;top:601px;width:79px;height:20px;background:#e4f7fc"></div>
<div class="t" style="left:890px;top:606px;width:70px;text-align:right;font-size:12px;line-height:12px;color:#404040;">17,60</div>
<div class="t" style="left:970px;top:606px;width:70px;text-align:right;font-size:12px;line-height:12px;color:#404040;">11,33</div>
<div class="t" style="left:1041px;top:606px;width:44px;text-align:right;font-size:12px;line-height:12px;color:#404040;">64 %</div>
<div style="left:1170px;top:601px;width:79px;height:20px;background:#e4f7fc"></div>
<div class="t" style="left:1095px;top:606px;width:70px;text-align:right;font-size:12px;line-height:12px;color:#404040;">16,80</div>
<div class="t" style="left:1175px;top:606px;width:70px;text-align:right;font-size:12px;line-height:12px;color:#404040;">11,33</div>
<div class="t" style="left:1246px;top:606px;width:44px;text-align:right;font-size:12px;line-height:12px;color:#404040;">67 %</div>
<div style="left:1375px;top:601px;width:79px;height:20px;background:#e4f7fc"></div>
<div class="t" style="left:1300px;top:606px;width:70px;text-align:right;font-size:12px;line-height:12px;color:#404040;">18,40</div>
<div class="t" style="left:1380px;top:606px;width:70px;text-align:right;font-size:12px;line-height:12px;color:#404040;">11,33</div>
<div class="t" style="left:1451px;top:606px;width:44px;text-align:right;font-size:12px;line-height:12px;color:#404040;">62 %</div>
<div class="t" style="left:1505px;top:606px;width:70px;text-align:right;font-size:12px;line-height:12px;color:#404040;">16,80</div>
<div class="t" style="left:1585px;top:606px;width:70px;text-align:right;font-size:12px;line-height:12px;color:#404040;">0,00</div>
<div class="t" style="left:1657px;top:606px;width:44px;text-align:right;font-size:12px;line-height:12px;color:#404040;">0 %</div>
<div style="left:56px;top:622px;width:1848px;height:20px;background:#e3fce3"></div>
<div style="left:0px;top:642px;width:16px;height:1px;background:#d5d5d5"></div>
<div style="left:56px;top:621px;width:1848px;height:1px;background:#d5d5d5"></div>
<div style="left:56px;top:642px;width:1848px;height:1px;background:#d5d5d5"></div>
<div style="left:56px;top:621px;width:1px;height:22px;background:#d5d5d5"></div>
<svg style="position:absolute;left:43px;top:629px" width="8" height="8" viewBox="0 0 8 8"><path d="M7 1 V7 H1 Z" fill="#555"/></svg>
<svg style="position:absolute;left:60px;top:624px" width="10" height="16" viewBox="0 0 10 16"><circle cx="5" cy="4" r="3.6" fill="#1b4f72"/><path d="M2.6 6.5 H7.4 Q8 10 9.6 13.5 V15.5 H0.4 V13.5 Q2 10 2.6 6.5 Z" fill="#1b4f72"/></svg>
<div class="t" style="left:74px;top:627px;font-size:12px;line-height:12px;color:#404040;">Kahr Anton</div>
<div style="left:680px;top:622px;width:205px;height:20px;background:#ff8080"></div>
<div class="t" style="left:685px;top:627px;width:70px;text-align:right;font-size:12px;line-height:12px;color:#404040;">17,60</div>
<div class="t" style="left:765px;top:627px;width:70px;text-align:right;font-size:12px;line-height:12px;color:#404040;">22,08</div>
<div class="t" style="left:836px;top:627px;width:44px;text-align:right;font-size:12px;line-height:12px;color:#404040;">125 %</div>
<div style="left:885px;top:622px;width:205px;height:20px;background:#ff8080"></div>
<div class="t" style="left:890px;top:627px;width:70px;text-align:right;font-size:12px;line-height:12px;color:#404040;">17,60</div>
<div class="t" style="left:970px;top:627px;width:70px;text-align:right;font-size:12px;line-height:12px;color:#404040;">21,42</div>
<div class="t" style="left:1041px;top:627px;width:44px;text-align:right;font-size:12px;line-height:12px;color:#404040;">122 %</div>
<div style="left:1090px;top:622px;width:205px;height:20px;background:#ff8080"></div>
<div class="t" style="left:1095px;top:627px;width:70px;text-align:right;font-size:12px;line-height:12px;color:#404040;">16,80</div>
<div class="t" style="left:1175px;top:627px;width:70px;text-align:right;font-size:12px;line-height:12px;color:#404040;">21,42</div>
<div class="t" style="left:1246px;top:627px;width:44px;text-align:right;font-size:12px;line-height:12px;color:#404040;">127 %</div>
<div style="left:1295px;top:622px;width:205px;height:20px;background:#ffff80"></div>
<div class="t" style="left:1300px;top:627px;width:70px;text-align:right;font-size:12px;line-height:12px;color:#404040;">18,40</div>
<div class="t" style="left:1380px;top:627px;width:70px;text-align:right;font-size:12px;line-height:12px;color:#404040;">21,42</div>
<div class="t" style="left:1451px;top:627px;width:44px;text-align:right;font-size:12px;line-height:12px;color:#404040;">116 %</div>
<div style="left:1500px;top:622px;width:206px;height:20px;background:#76e976"></div>
<div class="t" style="left:1505px;top:627px;width:70px;text-align:right;font-size:12px;line-height:12px;color:#404040;">16,80</div>
<div class="t" style="left:1585px;top:627px;width:70px;text-align:right;font-size:12px;line-height:12px;color:#404040;">0,00</div>
<div class="t" style="left:1657px;top:627px;width:44px;text-align:right;font-size:12px;line-height:12px;color:#404040;">0 %</div>
<div style="left:0px;top:663px;width:16px;height:1px;background:#d5d5d5"></div>
<div style="left:76px;top:642px;width:1828px;height:1px;background:#d5d5d5"></div>
<div style="left:76px;top:663px;width:1828px;height:1px;background:#d5d5d5"></div>
<div style="left:76px;top:642px;width:1px;height:22px;background:#d5d5d5"></div>
<svg style="position:absolute;left:65px;top:650px" width="6" height="9" viewBox="0 0 6 9"><path d="M0 0.5 L4.5 4 L0 7.5 Z" fill="#555"/></svg>
<div class="t" style="left:81px;top:648px;font-size:12px;line-height:12px;color:#404040;">Linientätigkeiten</div>
<div style="left:760px;top:643px;width:79px;height:20px;background:#e4f7fc"></div>
<div class="t" style="left:685px;top:648px;width:70px;text-align:right;font-size:12px;line-height:12px;color:#404040;">17,60</div>
<div class="t" style="left:765px;top:648px;width:70px;text-align:right;font-size:12px;line-height:12px;color:#404040;">22,08</div>
<div class="t" style="left:836px;top:648px;width:44px;text-align:right;font-size:12px;line-height:12px;color:#404040;">125 %</div>
<div style="left:965px;top:643px;width:79px;height:20px;background:#e4f7fc"></div>
<div class="t" style="left:890px;top:648px;width:70px;text-align:right;font-size:12px;line-height:12px;color:#404040;">17,60</div>
<div class="t" style="left:970px;top:648px;width:70px;text-align:right;font-size:12px;line-height:12px;color:#404040;">21,42</div>
<div class="t" style="left:1041px;top:648px;width:44px;text-align:right;font-size:12px;line-height:12px;color:#404040;">122 %</div>
<div style="left:1170px;top:643px;width:79px;height:20px;background:#e4f7fc"></div>
<div class="t" style="left:1095px;top:648px;width:70px;text-align:right;font-size:12px;line-height:12px;color:#404040;">16,80</div>
<div class="t" style="left:1175px;top:648px;width:70px;text-align:right;font-size:12px;line-height:12px;color:#404040;">21,42</div>
<div class="t" style="left:1246px;top:648px;width:44px;text-align:right;font-size:12px;line-height:12px;color:#404040;">127 %</div>
<div style="left:1375px;top:643px;width:79px;height:20px;background:#e4f7fc"></div>
<div class="t" style="left:1300px;top:648px;width:70px;text-align:right;font-size:12px;line-height:12px;color:#404040;">18,40</div>
<div class="t" style="left:1380px;top:648px;width:70px;text-align:right;font-size:12px;line-height:12px;color:#404040;">21,42</div>
<div class="t" style="left:1451px;top:648px;width:44px;text-align:right;font-size:12px;line-height:12px;color:#404040;">116 %</div>
<div class="t" style="left:1505px;top:648px;width:70px;text-align:right;font-size:12px;line-height:12px;color:#404040;">16,80</div>
<div class="t" style="left:1585px;top:648px;width:70px;text-align:right;font-size:12px;line-height:12px;color:#404040;">0,00</div>
<div class="t" style="left:1657px;top:648px;width:44px;text-align:right;font-size:12px;line-height:12px;color:#404040;">0 %</div>
<div style="left:56px;top:664px;width:1848px;height:20px;background:#e3fce3"></div>
<div style="left:0px;top:684px;width:16px;height:1px;background:#d5d5d5"></div>
<div style="left:56px;top:663px;width:1848px;height:1px;background:#d5d5d5"></div>
<div style="left:56px;top:684px;width:1848px;height:1px;background:#d5d5d5"></div>
<div style="left:56px;top:663px;width:1px;height:22px;background:#d5d5d5"></div>
<svg style="position:absolute;left:43px;top:671px" width="8" height="8" viewBox="0 0 8 8"><path d="M7 1 V7 H1 Z" fill="#555"/></svg>
<svg style="position:absolute;left:60px;top:666px" width="10" height="16" viewBox="0 0 10 16"><circle cx="5" cy="4" r="3.6" fill="#1b4f72"/><path d="M2.6 6.5 H7.4 Q8 10 9.6 13.5 V15.5 H0.4 V13.5 Q2 10 2.6 6.5 Z" fill="#1b4f72"/></svg>
<div class="t" style="left:74px;top:669px;font-size:12px;line-height:12px;color:#404040;">Mohr Julia</div>
<div style="left:680px;top:664px;width:205px;height:20px;background:#76e976"></div>
<div class="t" style="left:685px;top:669px;width:70px;text-align:right;font-size:12px;line-height:12px;color:#404040;">17,60</div>
<div class="t" style="left:765px;top:669px;width:70px;text-align:right;font-size:12px;line-height:12px;color:#404040;">13,75</div>
<div class="t" style="left:836px;top:669px;width:44px;text-align:right;font-size:12px;line-height:12px;color:#404040;">78 %</div>
<div style="left:885px;top:664px;width:205px;height:20px;background:#c4f7c4"></div>
<div class="t" style="left:890px;top:669px;width:70px;text-align:right;font-size:12px;line-height:12px;color:#404040;">13,20</div>
<div class="t" style="left:970px;top:669px;width:70px;text-align:right;font-size:12px;line-height:12px;color:#404040;">12,75</div>
<div class="t" style="left:1041px;top:669px;width:44px;text-align:right;font-size:12px;line-height:12px;color:#404040;">97 %</div>
<div style="left:1090px;top:664px;width:205px;height:20px;background:#c4f7c4"></div>
<div class="t" style="left:1095px;top:669px;width:70px;text-align:right;font-size:12px;line-height:12px;color:#404040;">12,60</div>
<div class="t" style="left:1175px;top:669px;width:70px;text-align:right;font-size:12px;line-height:12px;color:#404040;">12,75</div>
<div class="t" style="left:1246px;top:669px;width:44px;text-align:right;font-size:12px;line-height:12px;color:#404040;">101 %</div>
<div style="left:1295px;top:664px;width:205px;height:20px;background:#76e976"></div>
<div class="t" style="left:1300px;top:669px;width:70px;text-align:right;font-size:12px;line-height:12px;color:#404040;">13,80</div>
<div class="t" style="left:1380px;top:669px;width:70px;text-align:right;font-size:12px;line-height:12px;color:#404040;">12,75</div>
<div class="t" style="left:1451px;top:669px;width:44px;text-align:right;font-size:12px;line-height:12px;color:#404040;">92 %</div>
<div style="left:1500px;top:664px;width:206px;height:20px;background:#76e976"></div>
<div class="t" style="left:1505px;top:669px;width:70px;text-align:right;font-size:12px;line-height:12px;color:#404040;">12,60</div>
<div class="t" style="left:1585px;top:669px;width:70px;text-align:right;font-size:12px;line-height:12px;color:#404040;">1,83</div>
<div class="t" style="left:1657px;top:669px;width:44px;text-align:right;font-size:12px;line-height:12px;color:#404040;">15 %</div>
<div style="left:0px;top:705px;width:16px;height:1px;background:#d5d5d5"></div>
<div style="left:76px;top:684px;width:1828px;height:1px;background:#d5d5d5"></div>
<div style="left:76px;top:705px;width:1828px;height:1px;background:#d5d5d5"></div>
<div style="left:76px;top:684px;width:1px;height:22px;background:#d5d5d5"></div>
<svg style="position:absolute;left:65px;top:692px" width="6" height="9" viewBox="0 0 6 9"><path d="M0 0.5 L4.5 4 L0 7.5 Z" fill="#555"/></svg>
<div class="t" style="left:81px;top:690px;font-size:12px;line-height:12px;color:#404040;">Linientätigkeiten</div>
<div style="left:760px;top:685px;width:79px;height:20px;background:#e4f7fc"></div>
<div class="t" style="left:685px;top:690px;width:70px;text-align:right;font-size:12px;line-height:12px;color:#404040;">17,60</div>
<div class="t" style="left:765px;top:690px;width:70px;text-align:right;font-size:12px;line-height:12px;color:#404040;">13,75</div>
<div class="t" style="left:836px;top:690px;width:44px;text-align:right;font-size:12px;line-height:12px;color:#404040;">78 %</div>
<div style="left:965px;top:685px;width:79px;height:20px;background:#e4f7fc"></div>
<div class="t" style="left:890px;top:690px;width:70px;text-align:right;font-size:12px;line-height:12px;color:#404040;">13,20</div>
<div class="t" style="left:970px;top:690px;width:70px;text-align:right;font-size:12px;line-height:12px;color:#404040;">12,75</div>
<div class="t" style="left:1041px;top:690px;width:44px;text-align:right;font-size:12px;line-height:12px;color:#404040;">97 %</div>
<div style="left:1170px;top:685px;width:79px;height:20px;background:#e4f7fc"></div>
<div class="t" style="left:1095px;top:690px;width:70px;text-align:right;font-size:12px;line-height:12px;color:#404040;">12,60</div>
<div class="t" style="left:1175px;top:690px;width:70px;text-align:right;font-size:12px;line-height:12px;color:#404040;">12,75</div>
<div class="t" style="left:1246px;top:690px;width:44px;text-align:right;font-size:12px;line-height:12px;color:#404040;">101 %</div>
<div style="left:1375px;top:685px;width:79px;height:20px;background:#e4f7fc"></div>
<div class="t" style="left:1300px;top:690px;width:70px;text-align:right;font-size:12px;line-height:12px;color:#404040;">13,80</div>
<div class="t" style="left:1380px;top:690px;width:70px;text-align:right;font-size:12px;line-height:12px;color:#404040;">12,75</div>
<div class="t" style="left:1451px;top:690px;width:44px;text-align:right;font-size:12px;line-height:12px;color:#404040;">92 %</div>
<div style="left:1580px;top:685px;width:79px;height:20px;background:#e4f7fc"></div>
<div class="t" style="left:1505px;top:690px;width:70px;text-align:right;font-size:12px;line-height:12px;color:#404040;">12,60</div>
<div class="t" style="left:1585px;top:690px;width:70px;text-align:right;font-size:12px;line-height:12px;color:#404040;">1,83</div>
<div class="t" style="left:1657px;top:690px;width:44px;text-align:right;font-size:12px;line-height:12px;color:#404040;">15 %</div>
<div style="left:56px;top:706px;width:1848px;height:20px;background:#e3fce3"></div>
<div style="left:0px;top:726px;width:16px;height:1px;background:#d5d5d5"></div>
<div style="left:56px;top:705px;width:1848px;height:1px;background:#d5d5d5"></div>
<div style="left:56px;top:726px;width:1848px;height:1px;background:#d5d5d5"></div>
<div style="left:56px;top:705px;width:1px;height:22px;background:#d5d5d5"></div>
<svg style="position:absolute;left:43px;top:713px" width="8" height="8" viewBox="0 0 8 8"><path d="M7 1 V7 H1 Z" fill="#555"/></svg>
<svg style="position:absolute;left:60px;top:708px" width="10" height="16" viewBox="0 0 10 16"><circle cx="5" cy="4" r="3.6" fill="#1b4f72"/><path d="M2.6 6.5 H7.4 Q8 10 9.6 13.5 V15.5 H0.4 V13.5 Q2 10 2.6 6.5 Z" fill="#1b4f72"/></svg>
<div class="t" style="left:74px;top:711px;font-size:12px;line-height:12px;color:#404040;">Oger Helfried</div>
<div style="left:680px;top:706px;width:205px;height:20px;background:#76e976"></div>
<div class="t" style="left:685px;top:711px;width:70px;text-align:right;font-size:12px;line-height:12px;color:#404040;">17,60</div>
<div class="t" style="left:765px;top:711px;width:70px;text-align:right;font-size:12px;line-height:12px;color:#404040;">10,33</div>
<div class="t" style="left:836px;top:711px;width:44px;text-align:right;font-size:12px;line-height:12px;color:#404040;">59 %</div>
<div style="left:885px;top:706px;width:205px;height:20px;background:#76e976"></div>
<div class="t" style="left:890px;top:711px;width:70px;text-align:right;font-size:12px;line-height:12px;color:#404040;">17,60</div>
<div class="t" style="left:970px;top:711px;width:70px;text-align:right;font-size:12px;line-height:12px;color:#404040;">10,33</div>
<div class="t" style="left:1041px;top:711px;width:44px;text-align:right;font-size:12px;line-height:12px;color:#404040;">59 %</div>
<div style="left:1090px;top:706px;width:205px;height:20px;background:#76e976"></div>
<div class="t" style="left:1095px;top:711px;width:70px;text-align:right;font-size:12px;line-height:12px;color:#404040;">16,80</div>
<div class="t" style="left:1175px;top:711px;width:70px;text-align:right;font-size:12px;line-height:12px;color:#404040;">10,33</div>
<div class="t" style="left:1246px;top:711px;width:44px;text-align:right;font-size:12px;line-height:12px;color:#404040;">62 %</div>
<div style="left:1295px;top:706px;width:205px;height:20px;background:#76e976"></div>
<div class="t" style="left:1300px;top:711px;width:70px;text-align:right;font-size:12px;line-height:12px;color:#404040;">18,40</div>
<div class="t" style="left:1380px;top:711px;width:70px;text-align:right;font-size:12px;line-height:12px;color:#404040;">10,33</div>
<div class="t" style="left:1451px;top:711px;width:44px;text-align:right;font-size:12px;line-height:12px;color:#404040;">56 %</div>
<div style="left:1500px;top:706px;width:206px;height:20px;background:#76e976"></div>
<div class="t" style="left:1505px;top:711px;width:70px;text-align:right;font-size:12px;line-height:12px;color:#404040;">16,80</div>
<div class="t" style="left:1585px;top:711px;width:70px;text-align:right;font-size:12px;line-height:12px;color:#404040;">6,00</div>
<div class="t" style="left:1657px;top:711px;width:44px;text-align:right;font-size:12px;line-height:12px;color:#404040;">36 %</div>
<div style="left:0px;top:747px;width:16px;height:1px;background:#d5d5d5"></div>
<div style="left:76px;top:726px;width:1828px;height:1px;background:#d5d5d5"></div>
<div style="left:76px;top:747px;width:1828px;height:1px;background:#d5d5d5"></div>
<div style="left:76px;top:726px;width:1px;height:22px;background:#d5d5d5"></div>
<svg style="position:absolute;left:65px;top:734px" width="6" height="9" viewBox="0 0 6 9"><path d="M0 0.5 L4.5 4 L0 7.5 Z" fill="#555"/></svg>
<div class="t" style="left:81px;top:732px;font-size:12px;line-height:12px;color:#404040;">Linientätigkeiten</div>
<div style="left:760px;top:727px;width:79px;height:20px;background:#e4f7fc"></div>
<div class="t" style="left:685px;top:732px;width:70px;text-align:right;font-size:12px;line-height:12px;color:#404040;">17,60</div>
<div class="t" style="left:765px;top:732px;width:70px;text-align:right;font-size:12px;line-height:12px;color:#404040;">10,33</div>
<div class="t" style="left:836px;top:732px;width:44px;text-align:right;font-size:12px;line-height:12px;color:#404040;">59 %</div>
<div style="left:965px;top:727px;width:79px;height:20px;background:#e4f7fc"></div>
<div class="t" style="left:890px;top:732px;width:70px;text-align:right;font-size:12px;line-height:12px;color:#404040;">17,60</div>
<div class="t" style="left:970px;top:732px;width:70px;text-align:right;font-size:12px;line-height:12px;color:#404040;">10,33</div>
<div class="t" style="left:1041px;top:732px;width:44px;text-align:right;font-size:12px;line-height:12px;color:#404040;">59 %</div>
<div style="left:1170px;top:727px;width:79px;height:20px;background:#e4f7fc"></div>
<div class="t" style="left:1095px;top:732px;width:70px;text-align:right;font-size:12px;line-height:12px;color:#404040;">16,80</div>
<div class="t" style="left:1175px;top:732px;width:70px;text-align:right;font-size:12px;line-height:12px;color:#404040;">10,33</div>
<div class="t" style="left:1246px;top:732px;width:44px;text-align:right;font-size:12px;line-height:12px;color:#404040;">62 %</div>
<div style="left:1375px;top:727px;width:79px;height:20px;background:#e4f7fc"></div>
<div class="t" style="left:1300px;top:732px;width:70px;text-align:right;font-size:12px;line-height:12px;color:#404040;">18,40</div>
<div class="t" style="left:1380px;top:732px;width:70px;text-align:right;font-size:12px;line-height:12px;color:#404040;">10,33</div>
<div class="t" style="left:1451px;top:732px;width:44px;text-align:right;font-size:12px;line-height:12px;color:#404040;">56 %</div>
<div style="left:1580px;top:727px;width:79px;height:20px;background:#e4f7fc"></div>
<div class="t" style="left:1505px;top:732px;width:70px;text-align:right;font-size:12px;line-height:12px;color:#404040;">16,80</div>
<div class="t" style="left:1585px;top:732px;width:70px;text-align:right;font-size:12px;line-height:12px;color:#404040;">6,00</div>
<div class="t" style="left:1657px;top:732px;width:44px;text-align:right;font-size:12px;line-height:12px;color:#404040;">36 %</div>
<div style="left:56px;top:748px;width:1848px;height:20px;background:#e3fce3"></div>
<div style="left:0px;top:768px;width:16px;height:1px;background:#d5d5d5"></div>
<div style="left:56px;top:747px;width:1848px;height:1px;background:#d5d5d5"></div>
<div style="left:56px;top:768px;width:1848px;height:1px;background:#d5d5d5"></div>
<div style="left:56px;top:747px;width:1px;height:22px;background:#d5d5d5"></div>
<svg style="position:absolute;left:43px;top:755px" width="8" height="8" viewBox="0 0 8 8"><path d="M7 1 V7 H1 Z" fill="#555"/></svg>
<svg style="position:absolute;left:60px;top:750px" width="10" height="16" viewBox="0 0 10 16"><circle cx="5" cy="4" r="3.6" fill="#1b4f72"/><path d="M2.6 6.5 H7.4 Q8 10 9.6 13.5 V15.5 H0.4 V13.5 Q2 10 2.6 6.5 Z" fill="#1b4f72"/></svg>
<div class="t" style="left:74px;top:753px;font-size:12px;line-height:12px;color:#404040;">Osterwitz Gabriele</div>
<div style="left:680px;top:748px;width:205px;height:20px;background:#76e976"></div>
<div class="t" style="left:685px;top:753px;width:70px;text-align:right;font-size:12px;line-height:12px;color:#404040;">17,60</div>
<div class="t" style="left:765px;top:753px;width:70px;text-align:right;font-size:12px;line-height:12px;color:#404040;">11,80</div>
<div class="t" style="left:836px;top:753px;width:44px;text-align:right;font-size:12px;line-height:12px;color:#404040;">67 %</div>
<div style="left:885px;top:748px;width:205px;height:20px;background:#76e976"></div>
<div class="t" style="left:890px;top:753px;width:70px;text-align:right;font-size:12px;line-height:12px;color:#404040;">17,60</div>
<div class="t" style="left:970px;top:753px;width:70px;text-align:right;font-size:12px;line-height:12px;color:#404040;">10,13</div>
<div class="t" style="left:1041px;top:753px;width:44px;text-align:right;font-size:12px;line-height:12px;color:#404040;">58 %</div>
<div style="left:1090px;top:748px;width:205px;height:20px;background:#76e976"></div>
<div class="t" style="left:1095px;top:753px;width:70px;text-align:right;font-size:12px;line-height:12px;color:#404040;">16,80</div>
<div class="t" style="left:1175px;top:753px;width:70px;text-align:right;font-size:12px;line-height:12px;color:#404040;">10,13</div>
<div class="t" style="left:1246px;top:753px;width:44px;text-align:right;font-size:12px;line-height:12px;color:#404040;">60 %</div>
<div style="left:1295px;top:748px;width:205px;height:20px;background:#76e976"></div>
<div class="t" style="left:1300px;top:753px;width:70px;text-align:right;font-size:12px;line-height:12px;color:#404040;">18,40</div>
<div class="t" style="left:1380px;top:753px;width:70px;text-align:right;font-size:12px;line-height:12px;color:#404040;">10,13</div>
<div class="t" style="left:1451px;top:753px;width:44px;text-align:right;font-size:12px;line-height:12px;color:#404040;">55 %</div>
<div style="left:1500px;top:748px;width:206px;height:20px;background:#76e976"></div>
<div class="t" style="left:1505px;top:753px;width:70px;text-align:right;font-size:12px;line-height:12px;color:#404040;">16,80</div>
<div class="t" style="left:1585px;top:753px;width:70px;text-align:right;font-size:12px;line-height:12px;color:#404040;">0,05</div>
<div class="t" style="left:1657px;top:753px;width:44px;text-align:right;font-size:12px;line-height:12px;color:#404040;">0 %</div>
<div style="left:0px;top:789px;width:16px;height:1px;background:#d5d5d5"></div>
<div style="left:76px;top:768px;width:1828px;height:1px;background:#d5d5d5"></div>
<div style="left:76px;top:789px;width:1828px;height:1px;background:#d5d5d5"></div>
<div style="left:76px;top:768px;width:1px;height:22px;background:#d5d5d5"></div>
<svg style="position:absolute;left:65px;top:776px" width="6" height="9" viewBox="0 0 6 9"><path d="M0 0.5 L4.5 4 L0 7.5 Z" fill="#555"/></svg>
<div class="t" style="left:81px;top:774px;font-size:12px;line-height:12px;color:#404040;">Linientätigkeiten</div>
<div style="left:760px;top:769px;width:79px;height:20px;background:#e4f7fc"></div>
<div class="t" style="left:685px;top:774px;width:70px;text-align:right;font-size:12px;line-height:12px;color:#404040;">17,60</div>
<div class="t" style="left:765px;top:774px;width:70px;text-align:right;font-size:12px;line-height:12px;color:#404040;">11,80</div>
<div class="t" style="left:836px;top:774px;width:44px;text-align:right;font-size:12px;line-height:12px;color:#404040;">67 %</div>
<div style="left:965px;top:769px;width:79px;height:20px;background:#e4f7fc"></div>
<div class="t" style="left:890px;top:774px;width:70px;text-align:right;font-size:12px;line-height:12px;color:#404040;">17,60</div>
<div class="t" style="left:970px;top:774px;width:70px;text-align:right;font-size:12px;line-height:12px;color:#404040;">10,13</div>
<div class="t" style="left:1041px;top:774px;width:44px;text-align:right;font-size:12px;line-height:12px;color:#404040;">58 %</div>
<div style="left:1170px;top:769px;width:79px;height:20px;background:#e4f7fc"></div>
<div class="t" style="left:1095px;top:774px;width:70px;text-align:right;font-size:12px;line-height:12px;color:#404040;">16,80</div>
<div class="t" style="left:1175px;top:774px;width:70px;text-align:right;font-size:12px;line-height:12px;color:#404040;">10,13</div>
<div class="t" style="left:1246px;top:774px;width:44px;text-align:right;font-size:12px;line-height:12px;color:#404040;">60 %</div>
<div style="left:1375px;top:769px;width:79px;height:20px;background:#e4f7fc"></div>
<div class="t" style="left:1300px;top:774px;width:70px;text-align:right;font-size:12px;line-height:12px;color:#404040;">18,40</div>
<div class="t" style="left:1380px;top:774px;width:70px;text-align:right;font-size:12px;line-height:12px;color:#404040;">10,13</div>
<div class="t" style="left:1451px;top:774px;width:44px;text-align:right;font-size:12px;line-height:12px;color:#404040;">55 %</div>
<div style="left:1580px;top:769px;width:79px;height:20px;background:#e4f7fc"></div>
<div class="t" style="left:1505px;top:774px;width:70px;text-align:right;font-size:12px;line-height:12px;color:#404040;">16,80</div>
<div class="t" style="left:1585px;top:774px;width:70px;text-align:right;font-size:12px;line-height:12px;color:#404040;">0,05</div>
<div class="t" style="left:1657px;top:774px;width:44px;text-align:right;font-size:12px;line-height:12px;color:#404040;">0 %</div>
<div style="left:56px;top:790px;width:1848px;height:20px;background:#e3fce3"></div>
<div style="left:0px;top:810px;width:16px;height:1px;background:#d5d5d5"></div>
<div style="left:56px;top:789px;width:1848px;height:1px;background:#d5d5d5"></div>
<div style="left:56px;top:810px;width:1848px;height:1px;background:#d5d5d5"></div>
<div style="left:56px;top:789px;width:1px;height:22px;background:#d5d5d5"></div>
<svg style="position:absolute;left:43px;top:797px" width="8" height="8" viewBox="0 0 8 8"><path d="M7 1 V7 H1 Z" fill="#555"/></svg>
<svg style="position:absolute;left:60px;top:792px" width="10" height="16" viewBox="0 0 10 16"><circle cx="5" cy="4" r="3.6" fill="#c8141c"/><path d="M2.6 6.5 H7.4 Q8 10 9.6 13.5 V15.5 H0.4 V13.5 Q2 10 2.6 6.5 Z" fill="#c8141c"/></svg>
<div class="t" style="left:74px;top:795px;font-size:12px;line-height:12px;color:#404040;">Roller Alexander</div>
<div style="left:680px;top:790px;width:205px;height:20px;background:#ff8080"></div>
<div class="t" style="left:685px;top:795px;width:70px;text-align:right;font-size:12px;line-height:12px;color:#404040;">17,60</div>
<div class="t" style="left:765px;top:795px;width:70px;text-align:right;font-size:12px;line-height:12px;color:#404040;">23,97</div>
<div class="t" style="left:836px;top:795px;width:44px;text-align:right;font-size:12px;line-height:12px;color:#404040;">136 %</div>
<div style="left:885px;top:790px;width:205px;height:20px;background:#ff8080"></div>
<div class="t" style="left:890px;top:795px;width:70px;text-align:right;font-size:12px;line-height:12px;color:#404040;">17,60</div>
<div class="t" style="left:970px;top:795px;width:70px;text-align:right;font-size:12px;line-height:12px;color:#404040;">21,86</div>
<div class="t" style="left:1041px;top:795px;width:44px;text-align:right;font-size:12px;line-height:12px;color:#404040;">124 %</div>
<div style="left:1090px;top:790px;width:205px;height:20px;background:#ff8080"></div>
<div class="t" style="left:1095px;top:795px;width:70px;text-align:right;font-size:12px;line-height:12px;color:#404040;">16,80</div>
<div class="t" style="left:1175px;top:795px;width:70px;text-align:right;font-size:12px;line-height:12px;color:#404040;">22,87</div>
<div class="t" style="left:1246px;top:795px;width:44px;text-align:right;font-size:12px;line-height:12px;color:#404040;">136 %</div>
<div style="left:1295px;top:790px;width:205px;height:20px;background:#ff8080"></div>
<div class="t" style="left:1300px;top:795px;width:70px;text-align:right;font-size:12px;line-height:12px;color:#404040;">15,40</div>
<div class="t" style="left:1380px;top:795px;width:70px;text-align:right;font-size:12px;line-height:12px;color:#404040;">20,47</div>
<div class="t" style="left:1451px;top:795px;width:44px;text-align:right;font-size:12px;line-height:12px;color:#404040;">133 %</div>
<div style="left:1500px;top:790px;width:206px;height:20px;background:#76e976"></div>
<div class="t" style="left:1505px;top:795px;width:70px;text-align:right;font-size:12px;line-height:12px;color:#404040;">16,80</div>
<div class="t" style="left:1585px;top:795px;width:70px;text-align:right;font-size:12px;line-height:12px;color:#404040;">9,08</div>
<div class="t" style="left:1657px;top:795px;width:44px;text-align:right;font-size:12px;line-height:12px;color:#404040;">54 %</div>
<div style="left:0px;top:831px;width:16px;height:1px;background:#d5d5d5"></div>
<div style="left:76px;top:810px;width:1828px;height:1px;background:#d5d5d5"></div>
<div style="left:76px;top:831px;width:1828px;height:1px;background:#d5d5d5"></div>
<div style="left:76px;top:810px;width:1px;height:22px;background:#d5d5d5"></div>
<svg style="position:absolute;left:65px;top:818px" width="6" height="9" viewBox="0 0 6 9"><path d="M0 0.5 L4.5 4 L0 7.5 Z" fill="#555"/></svg>
<div class="t" style="left:81px;top:816px;font-size:12px;line-height:12px;color:#404040;">Geplante Projekte</div>
<div style="left:760px;top:811px;width:79px;height:20px;background:#e4f7fc"></div>
<div class="t" style="left:685px;top:816px;width:70px;text-align:right;font-size:12px;line-height:12px;color:#404040;">17,60</div>
<div class="t" style="left:765px;top:816px;width:70px;text-align:right;font-size:12px;line-height:12px;color:#404040;">10,00</div>
<div class="t" style="left:836px;top:816px;width:44px;text-align:right;font-size:12px;line-height:12px;color:#404040;">57 %</div>
<div style="left:965px;top:811px;width:79px;height:20px;background:#e4f7fc"></div>
<div class="t" style="left:890px;top:816px;width:70px;text-align:right;font-size:12px;line-height:12px;color:#404040;">17,60</div>
<div class="t" style="left:970px;top:816px;width:70px;text-align:right;font-size:12px;line-height:12px;color:#404040;">10,00</div>
<div class="t" style="left:1041px;top:816px;width:44px;text-align:right;font-size:12px;line-height:12px;color:#404040;">57 %</div>
<div style="left:1170px;top:811px;width:79px;height:20px;background:#e4f7fc"></div>
<div class="t" style="left:1095px;top:816px;width:70px;text-align:right;font-size:12px;line-height:12px;color:#404040;">16,80</div>
<div class="t" style="left:1175px;top:816px;width:70px;text-align:right;font-size:12px;line-height:12px;color:#404040;">10,00</div>
<div class="t" style="left:1246px;top:816px;width:44px;text-align:right;font-size:12px;line-height:12px;color:#404040;">60 %</div>
<div style="left:1375px;top:811px;width:79px;height:20px;background:#e4f7fc"></div>
<div class="t" style="left:1300px;top:816px;width:70px;text-align:right;font-size:12px;line-height:12px;color:#404040;">15,40</div>
<div class="t" style="left:1380px;top:816px;width:70px;text-align:right;font-size:12px;line-height:12px;color:#404040;">10,00</div>
<div class="t" style="left:1451px;top:816px;width:44px;text-align:right;font-size:12px;line-height:12px;color:#404040;">65 %</div>
<div style="left:1580px;top:811px;width:79px;height:20px;background:#e4f7fc"></div>
<div class="t" style="left:1505px;top:816px;width:70px;text-align:right;font-size:12px;line-height:12px;color:#404040;">16,80</div>
<div class="t" style="left:1585px;top:816px;width:70px;text-align:right;font-size:12px;line-height:12px;color:#404040;">7,08</div>
<div class="t" style="left:1657px;top:816px;width:44px;text-align:right;font-size:12px;line-height:12px;color:#404040;">42 %</div>
<div style="left:0px;top:852px;width:16px;height:1px;background:#d5d5d5"></div>
<div style="left:76px;top:831px;width:1828px;height:1px;background:#d5d5d5"></div>
<div style="left:76px;top:852px;width:1828px;height:1px;background:#d5d5d5"></div>
<div style="left:76px;top:831px;width:1px;height:22px;background:#d5d5d5"></div>
<svg style="position:absolute;left:65px;top:839px" width="6" height="9" viewBox="0 0 6 9"><path d="M0 0.5 L4.5 4 L0 7.5 Z" fill="#555"/></svg>
<div class="t" style="left:81px;top:837px;font-size:12px;line-height:12px;color:#404040;">Laufende Projekte</div>
<div style="left:760px;top:832px;width:79px;height:20px;background:#e4f7fc"></div>
<div class="t" style="left:685px;top:837px;width:70px;text-align:right;font-size:12px;line-height:12px;color:#404040;">17,60</div>
<div class="t" style="left:765px;top:837px;width:70px;text-align:right;font-size:12px;line-height:12px;color:#404040;">3,55</div>
<div class="t" style="left:836px;top:837px;width:44px;text-align:right;font-size:12px;line-height:12px;color:#404040;">20 %</div>
<div style="left:965px;top:832px;width:79px;height:20px;background:#e4f7fc"></div>
<div class="t" style="left:890px;top:837px;width:70px;text-align:right;font-size:12px;line-height:12px;color:#404040;">17,60</div>
<div class="t" style="left:970px;top:837px;width:70px;text-align:right;font-size:12px;line-height:12px;color:#404040;">3,78</div>
<div class="t" style="left:1041px;top:837px;width:44px;text-align:right;font-size:12px;line-height:12px;color:#404040;">21 %</div>
<div style="left:1170px;top:832px;width:79px;height:20px;background:#e4f7fc"></div>
<div class="t" style="left:1095px;top:837px;width:70px;text-align:right;font-size:12px;line-height:12px;color:#404040;">16,80</div>
<div class="t" style="left:1175px;top:837px;width:70px;text-align:right;font-size:12px;line-height:12px;color:#404040;">4,78</div>
<div class="t" style="left:1246px;top:837px;width:44px;text-align:right;font-size:12px;line-height:12px;color:#404040;">28 %</div>
<div style="left:1375px;top:832px;width:79px;height:20px;background:#e4f7fc"></div>
<div class="t" style="left:1300px;top:837px;width:70px;text-align:right;font-size:12px;line-height:12px;color:#404040;">15,40</div>
<div class="t" style="left:1380px;top:837px;width:70px;text-align:right;font-size:12px;line-height:12px;color:#404040;">2,39</div>
<div class="t" style="left:1451px;top:837px;width:44px;text-align:right;font-size:12px;line-height:12px;color:#404040;">15 %</div>
<div class="t" style="left:1505px;top:837px;width:70px;text-align:right;font-size:12px;line-height:12px;color:#404040;">16,80</div>
<div class="t" style="left:1585px;top:837px;width:70px;text-align:right;font-size:12px;line-height:12px;color:#404040;">0,00</div>
<div class="t" style="left:1657px;top:837px;width:44px;text-align:right;font-size:12px;line-height:12px;color:#404040;">0 %</div>
<div style="left:0px;top:873px;width:16px;height:1px;background:#d5d5d5"></div>
<div style="left:76px;top:852px;width:1828px;height:1px;background:#d5d5d5"></div>
<div style="left:76px;top:873px;width:1828px;height:1px;background:#d5d5d5"></div>
<div style="left:76px;top:852px;width:1px;height:22px;background:#d5d5d5"></div>
<svg style="position:absolute;left:65px;top:860px" width="6" height="9" viewBox="0 0 6 9"><path d="M0 0.5 L4.5 4 L0 7.5 Z" fill="#555"/></svg>
<div class="t" style="left:81px;top:858px;font-size:12px;line-height:12px;color:#404040;">Linientätigkeiten</div>
<div style="left:760px;top:853px;width:79px;height:20px;background:#e4f7fc"></div>
<div class="t" style="left:685px;top:858px;width:70px;text-align:right;font-size:12px;line-height:12px;color:#404040;">17,60</div>
<div class="t" style="left:765px;top:858px;width:70px;text-align:right;font-size:12px;line-height:12px;color:#404040;">10,42</div>
<div class="t" style="left:836px;top:858px;width:44px;text-align:right;font-size:12px;line-height:12px;color:#404040;">59 %</div>
<div style="left:965px;top:853px;width:79px;height:20px;background:#e4f7fc"></div>
<div class="t" style="left:890px;top:858px;width:70px;text-align:right;font-size:12px;line-height:12px;color:#404040;">17,60</div>
<div class="t" style="left:970px;top:858px;width:70px;text-align:right;font-size:12px;line-height:12px;color:#404040;">8,08</div>
<div class="t" style="left:1041px;top:858px;width:44px;text-align:right;font-size:12px;line-height:12px;color:#404040;">46 %</div>
<div style="left:1170px;top:853px;width:79px;height:20px;background:#e4f7fc"></div>
<div class="t" style="left:1095px;top:858px;width:70px;text-align:right;font-size:12px;line-height:12px;color:#404040;">16,80</div>
<div class="t" style="left:1175px;top:858px;width:70px;text-align:right;font-size:12px;line-height:12px;color:#404040;">8,08</div>
<div class="t" style="left:1246px;top:858px;width:44px;text-align:right;font-size:12px;line-height:12px;color:#404040;">48 %</div>
<div style="left:1375px;top:853px;width:79px;height:20px;background:#e4f7fc"></div>
<div class="t" style="left:1300px;top:858px;width:70px;text-align:right;font-size:12px;line-height:12px;color:#404040;">15,40</div>
<div class="t" style="left:1380px;top:858px;width:70px;text-align:right;font-size:12px;line-height:12px;color:#404040;">8,08</div>
<div class="t" style="left:1451px;top:858px;width:44px;text-align:right;font-size:12px;line-height:12px;color:#404040;">52 %</div>
<div style="left:1580px;top:853px;width:79px;height:20px;background:#e4f7fc"></div>
<div class="t" style="left:1505px;top:858px;width:70px;text-align:right;font-size:12px;line-height:12px;color:#404040;">16,80</div>
<div class="t" style="left:1585px;top:858px;width:70px;text-align:right;font-size:12px;line-height:12px;color:#404040;">2,00</div>
<div class="t" style="left:1657px;top:858px;width:44px;text-align:right;font-size:12px;line-height:12px;color:#404040;">12 %</div>
<div style="left:0px;top:894px;width:16px;height:1px;background:#d5d5d5"></div>
<div style="left:76px;top:873px;width:1828px;height:1px;background:#d5d5d5"></div>
<div style="left:76px;top:894px;width:1828px;height:1px;background:#d5d5d5"></div>
<div style="left:76px;top:873px;width:1px;height:22px;background:#d5d5d5"></div>
<svg style="position:absolute;left:65px;top:881px" width="6" height="9" viewBox="0 0 6 9"><path d="M0 0.5 L4.5 4 L0 7.5 Z" fill="#555"/></svg>
<div class="t" style="left:81px;top:879px;font-size:12px;line-height:12px;color:#404040;">Abwesenheiten</div>
<div class="t" style="left:685px;top:879px;width:70px;text-align:right;font-size:12px;line-height:12px;color:#404040;">17,60</div>
<div class="t" style="left:765px;top:879px;width:70px;text-align:right;font-size:12px;line-height:12px;color:#404040;">0,00</div>
<div class="t" style="left:836px;top:879px;width:44px;text-align:right;font-size:12px;line-height:12px;color:#404040;">0 %</div>
<div class="t" style="left:890px;top:879px;width:70px;text-align:right;font-size:12px;line-height:12px;color:#404040;">17,60</div>
<div class="t" style="left:970px;top:879px;width:70px;text-align:right;font-size:12px;line-height:12px;color:#404040;">0,00</div>
<div class="t" style="left:1041px;top:879px;width:44px;text-align:right;font-size:12px;line-height:12px;color:#404040;">0 %</div>
<div class="t" style="left:1095px;top:879px;width:70px;text-align:right;font-size:12px;line-height:12px;color:#404040;">16,80</div>
<div class="t" style="left:1175px;top:879px;width:70px;text-align:right;font-size:12px;line-height:12px;color:#404040;">0,00</div>
<div class="t" style="left:1246px;top:879px;width:44px;text-align:right;font-size:12px;line-height:12px;color:#404040;">0 %</div>
<div style="left:1375px;top:874px;width:79px;height:20px;background:#e4f7fc"></div>
<div class="t" style="left:1300px;top:879px;width:70px;text-align:right;font-size:12px;line-height:12px;color:#404040;">18,40</div>
<div class="t" style="left:1380px;top:879px;width:70px;text-align:right;font-size:12px;line-height:12px;color:#404040;">3,00</div>
<div class="t" style="left:1451px;top:879px;width:44px;text-align:right;font-size:12px;line-height:12px;color:#404040;">16 %</div>
<div class="t" style="left:1505px;top:879px;width:70px;text-align:right;font-size:12px;line-height:12px;color:#404040;">16,80</div>
<div class="t" style="left:1585px;top:879px;width:70px;text-align:right;font-size:12px;line-height:12px;color:#404040;">0,00</div>
<div class="t" style="left:1657px;top:879px;width:44px;text-align:right;font-size:12px;line-height:12px;color:#404040;">0 %</div>
<div style="left:56px;top:895px;width:1848px;height:20px;background:#e3fce3"></div>
<div style="left:0px;top:915px;width:16px;height:1px;background:#d5d5d5"></div>
<div style="left:56px;top:894px;width:1848px;height:1px;background:#d5d5d5"></div>
<div style="left:56px;top:915px;width:1848px;height:1px;background:#d5d5d5"></div>
<div style="left:56px;top:894px;width:1px;height:22px;background:#d5d5d5"></div>
<svg style="position:absolute;left:43px;top:902px" width="8" height="8" viewBox="0 0 8 8"><path d="M7 1 V7 H1 Z" fill="#555"/></svg>
<svg style="position:absolute;left:60px;top:897px" width="10" height="16" viewBox="0 0 10 16"><circle cx="5" cy="4" r="3.6" fill="#1b4f72"/><path d="M2.6 6.5 H7.4 Q8 10 9.6 13.5 V15.5 H0.4 V13.5 Q2 10 2.6 6.5 Z" fill="#1b4f72"/></svg>
<div class="t" style="left:74px;top:900px;font-size:12px;line-height:12px;color:#404040;">Stettner Bernhard</div>
<div style="left:680px;top:895px;width:205px;height:20px;background:#c4f7c4"></div>
<div class="t" style="left:685px;top:900px;width:70px;text-align:right;font-size:12px;line-height:12px;color:#404040;">17,60</div>
<div class="t" style="left:765px;top:900px;width:70px;text-align:right;font-size:12px;line-height:12px;color:#404040;">18,17</div>
<div class="t" style="left:836px;top:900px;width:44px;text-align:right;font-size:12px;line-height:12px;color:#404040;">103 %</div>
<div style="left:885px;top:895px;width:205px;height:20px;background:#76e976"></div>
<div class="t" style="left:890px;top:900px;width:70px;text-align:right;font-size:12px;line-height:12px;color:#404040;">17,60</div>
<div class="t" style="left:970px;top:900px;width:70px;text-align:right;font-size:12px;line-height:12px;color:#404040;">14,83</div>
<div class="t" style="left:1041px;top:900px;width:44px;text-align:right;font-size:12px;line-height:12px;color:#404040;">84 %</div>
<div style="left:1090px;top:895px;width:205px;height:20px;background:#76e976"></div>
<div class="t" style="left:1095px;top:900px;width:70px;text-align:right;font-size:12px;line-height:12px;color:#404040;">16,80</div>
<div class="t" style="left:1175px;top:900px;width:70px;text-align:right;font-size:12px;line-height:12px;color:#404040;">14,83</div>
<div class="t" style="left:1246px;top:900px;width:44px;text-align:right;font-size:12px;line-height:12px;color:#404040;">88 %</div>
<div style="left:1295px;top:895px;width:205px;height:20px;background:#76e976"></div>
<div class="t" style="left:1300px;top:900px;width:70px;text-align:right;font-size:12px;line-height:12px;color:#404040;">18,40</div>
<div class="t" style="left:1380px;top:900px;width:70px;text-align:right;font-size:12px;line-height:12px;color:#404040;">14,83</div>
<div class="t" style="left:1451px;top:900px;width:44px;text-align:right;font-size:12px;line-height:12px;color:#404040;">81 %</div>
<div style="left:1500px;top:895px;width:206px;height:20px;background:#76e976"></div>
<div class="t" style="left:1505px;top:900px;width:70px;text-align:right;font-size:12px;line-height:12px;color:#404040;">16,80</div>
<div class="t" style="left:1585px;top:900px;width:70px;text-align:right;font-size:12px;line-height:12px;color:#404040;">15,67</div>
<div class="t" style="left:1657px;top:900px;width:44px;text-align:right;font-size:12px;line-height:12px;color:#404040;">93 %</div>
<div style="left:0px;top:915px;width:16px;height:1px;background:#d5d5d5"></div>
<div style="left:76px;top:915px;width:1828px;height:1px;background:#d5d5d5"></div>
<div style="left:76px;top:915px;width:1px;height:6px;background:#d5d5d5"></div>
<div style="left:760px;top:916px;width:79px;height:5px;background:#e4f7fc"></div>
<div style="left:965px;top:916px;width:79px;height:5px;background:#e4f7fc"></div>
<div style="left:1170px;top:916px;width:79px;height:5px;background:#e4f7fc"></div>
<div style="left:1375px;top:916px;width:79px;height:5px;background:#e4f7fc"></div>
<div style="left:1580px;top:916px;width:79px;height:5px;background:#e4f7fc"></div>
<div style="left:0px;top:242px;width:1px;height:679px;background:#d5d5d5"></div>
<div style="left:16px;top:242px;width:1px;height:679px;background:#d5d5d5"></div>
<div style="left:376px;top:242px;width:1px;height:679px;background:#d5d5d5"></div>
<div style="left:677px;top:242px;width:1px;height:679px;background:#d5d5d5"></div>
<div style="left:679px;top:242px;width:1px;height:679px;background:#d5d5d5"></div>
<div style="left:759px;top:265px;width:1px;height:656px;background:#d5d5d5"></div>
<div style="left:839px;top:265px;width:1px;height:656px;background:#d5d5d5"></div>
<div style="left:884px;top:242px;width:1px;height:679px;background:#d5d5d5"></div>
<div style="left:964px;top:265px;width:1px;height:656px;background:#d5d5d5"></div>
<div style="left:1044px;top:265px;width:1px;height:656px;background:#d5d5d5"></div>
<div style="left:1089px;top:242px;width:1px;height:679px;background:#d5d5d5"></div>
<div style="left:1169px;top:265px;width:1px;height:656px;background:#d5d5d5"></div>
<div style="left:1249px;top:265px;width:1px;height:656px;background:#d5d5d5"></div>
<div style="left:1294px;top:242px;width:1px;height:679px;background:#d5d5d5"></div>
<div style="left:1374px;top:265px;width:1px;height:656px;background:#d5d5d5"></div>
<div style="left:1454px;top:265px;width:1px;height:656px;background:#d5d5d5"></div>
<div style="left:1499px;top:242px;width:1px;height:679px;background:#d5d5d5"></div>
<div style="left:1579px;top:265px;width:1px;height:656px;background:#d5d5d5"></div>
<div style="left:1659px;top:265px;width:1px;height:656px;background:#d5d5d5"></div>
<div style="left:1705px;top:242px;width:1px;height:679px;background:#d5d5d5"></div>
<div style="left:759px;top:265px;width:1px;height:20px;background:#e5e5b2"></div>
<div style="left:839px;top:265px;width:1px;height:20px;background:#e5e5b2"></div>
<div style="left:884px;top:265px;width:1px;height:20px;background:#e5e5b2"></div>
<div style="left:964px;top:265px;width:1px;height:20px;background:#e5e5b2"></div>
<div style="left:1044px;top:265px;width:1px;height:20px;background:#e5e5b2"></div>
<div style="left:1089px;top:265px;width:1px;height:20px;background:#e5e5b2"></div>
<div style="left:1169px;top:265px;width:1px;height:20px;background:#e5b2b2"></div>
<div style="left:1249px;top:265px;width:1px;height:20px;background:#e5b2b2"></div>
<div style="left:1294px;top:265px;width:1px;height:20px;background:#e5b2b2"></div>
<div style="left:1374px;top:265px;width:1px;height:20px;background:#e5e5b2"></div>
<div style="left:1454px;top:265px;width:1px;height:20px;background:#e5e5b2"></div>
<div style="left:1499px;top:265px;width:1px;height:20px;background:#e5e5b2"></div>
<div style="left:1579px;top:265px;width:1px;height:20px;background:#aedcae"></div>
<div style="left:1659px;top:265px;width:1px;height:20px;background:#aedcae"></div>
<div style="left:1705px;top:265px;width:1px;height:20px;background:#aedcae"></div>
<div style="left:759px;top:391px;width:1px;height:20px;background:#e5b2b2"></div>
<div style="left:839px;top:391px;width:1px;height:20px;background:#e5b2b2"></div>
<div style="left:884px;top:391px;width:1px;height:20px;background:#e5b2b2"></div>
<div style="left:964px;top:391px;width:1px;height:20px;background:#e5b2b2"></div>
<div style="left:1044px;top:391px;width:1px;height:20px;background:#e5b2b2"></div>
<div style="left:1089px;top:391px;width:1px;height:20px;background:#e5b2b2"></div>
<div style="left:1169px;top:391px;width:1px;height:20px;background:#e5b2b2"></div>
<div style="left:1249px;top:391px;width:1px;height:20px;background:#e5b2b2"></div>
<div style="left:1294px;top:391px;width:1px;height:20px;background:#e5b2b2"></div>
<div style="left:1374px;top:391px;width:1px;height:20px;background:#e5b2b2"></div>
<div style="left:1454px;top:391px;width:1px;height:20px;background:#e5b2b2"></div>
<div style="left:1499px;top:391px;width:1px;height:20px;background:#e5b2b2"></div>
<div style="left:1579px;top:391px;width:1px;height:20px;background:#aedcae"></div>
<div style="left:1659px;top:391px;width:1px;height:20px;background:#aedcae"></div>
<div style="left:1705px;top:391px;width:1px;height:20px;background:#aedcae"></div>
<div style="left:759px;top:475px;width:1px;height:20px;background:#e5b2b2"></div>
<div style="left:839px;top:475px;width:1px;height:20px;background:#e5b2b2"></div>
<div style="left:884px;top:475px;width:1px;height:20px;background:#e5b2b2"></div>
<div style="left:964px;top:475px;width:1px;height:20px;background:#e5b2b2"></div>
<div style="left:1044px;top:475px;width:1px;height:20px;background:#e5b2b2"></div>
<div style="left:1089px;top:475px;width:1px;height:20px;background:#e5b2b2"></div>
<div style="left:1169px;top:475px;width:1px;height:20px;background:#e5b2b2"></div>
<div style="left:1249px;top:475px;width:1px;height:20px;background:#e5b2b2"></div>
<div style="left:1294px;top:475px;width:1px;height:20px;background:#e5b2b2"></div>
<div style="left:1374px;top:475px;width:1px;height:20px;background:#e5b2b2"></div>
<div style="left:1454px;top:475px;width:1px;height:20px;background:#e5b2b2"></div>
<div style="left:1499px;top:475px;width:1px;height:20px;background:#e5b2b2"></div>
<div style="left:1579px;top:475px;width:1px;height:20px;background:#aedcae"></div>
<div style="left:1659px;top:475px;width:1px;height:20px;background:#aedcae"></div>
<div style="left:1705px;top:475px;width:1px;height:20px;background:#aedcae"></div>
<div style="left:759px;top:559px;width:1px;height:20px;background:#e5b2b2"></div>
<div style="left:839px;top:559px;width:1px;height:20px;background:#e5b2b2"></div>
<div style="left:884px;top:559px;width:1px;height:20px;background:#e5b2b2"></div>
<div style="left:964px;top:559px;width:1px;height:20px;background:#e5b2b2"></div>
<div style="left:1044px;top:559px;width:1px;height:20px;background:#e5b2b2"></div>
<div style="left:1089px;top:559px;width:1px;height:20px;background:#e5b2b2"></div>
<div style="left:1169px;top:559px;width:1px;height:20px;background:#e5b2b2"></div>
<div style="left:1249px;top:559px;width:1px;height:20px;background:#e5b2b2"></div>
<div style="left:1294px;top:559px;width:1px;height:20px;background:#e5b2b2"></div>
<div style="left:1374px;top:559px;width:1px;height:20px;background:#e5b2b2"></div>
<div style="left:1454px;top:559px;width:1px;height:20px;background:#e5b2b2"></div>
<div style="left:1499px;top:559px;width:1px;height:20px;background:#e5b2b2"></div>
<div style="left:1579px;top:559px;width:1px;height:20px;background:#aedcae"></div>
<div style="left:1659px;top:559px;width:1px;height:20px;background:#aedcae"></div>
<div style="left:1705px;top:559px;width:1px;height:20px;background:#aedcae"></div>
<div style="left:759px;top:622px;width:1px;height:20px;background:#e5b2b2"></div>
<div style="left:839px;top:622px;width:1px;height:20px;background:#e5b2b2"></div>
<div style="left:884px;top:622px;width:1px;height:20px;background:#e5b2b2"></div>
<div style="left:964px;top:622px;width:1px;height:20px;background:#e5b2b2"></div>
<div style="left:1044px;top:622px;width:1px;height:20px;background:#e5b2b2"></div>
<div style="left:1089px;top:622px;width:1px;height:20px;background:#e5b2b2"></div>
<div style="left:1169px;top:622px;width:1px;height:20px;background:#e5b2b2"></div>
<div style="left:1249px;top:622px;width:1px;height:20px;background:#e5b2b2"></div>
<div style="left:1294px;top:622px;width:1px;height:20px;background:#e5b2b2"></div>
<div style="left:1374px;top:622px;width:1px;height:20px;background:#e5e5b2"></div>
<div style="left:1454px;top:622px;width:1px;height:20px;background:#e5e5b2"></div>
<div style="left:1499px;top:622px;width:1px;height:20px;background:#e5e5b2"></div>
<div style="left:1579px;top:622px;width:1px;height:20px;background:#aedcae"></div>
<div style="left:1659px;top:622px;width:1px;height:20px;background:#aedcae"></div>
<div style="left:1705px;top:622px;width:1px;height:20px;background:#aedcae"></div>
<div style="left:759px;top:664px;width:1px;height:20px;background:#aedcae"></div>
<div style="left:839px;top:664px;width:1px;height:20px;background:#aedcae"></div>
<div style="left:884px;top:664px;width:1px;height:20px;background:#aedcae"></div>
<div style="left:964px;top:664px;width:1px;height:20px;background:#cee2ce"></div>
<div style="left:1044px;top:664px;width:1px;height:20px;background:#cee2ce"></div>
<div style="left:1089px;top:664px;width:1px;height:20px;background:#cee2ce"></div>
<div style="left:1169px;top:664px;width:1px;height:20px;background:#cee2ce"></div>
<div style="left:1249px;top:664px;width:1px;height:20px;background:#cee2ce"></div>
<div style="left:1294px;top:664px;width:1px;height:20px;background:#cee2ce"></div>
<div style="left:1374px;top:664px;width:1px;height:20px;background:#aedcae"></div>
<div style="left:1454px;top:664px;width:1px;height:20px;background:#aedcae"></div>
<div style="left:1499px;top:664px;width:1px;height:20px;background:#aedcae"></div>
<div style="left:1579px;top:664px;width:1px;height:20px;background:#aedcae"></div>
<div style="left:1659px;top:664px;width:1px;height:20px;background:#aedcae"></div>
<div style="left:1705px;top:664px;width:1px;height:20px;background:#aedcae"></div>
<div style="left:759px;top:706px;width:1px;height:20px;background:#aedcae"></div>
<div style="left:839px;top:706px;width:1px;height:20px;background:#aedcae"></div>
<div style="left:884px;top:706px;width:1px;height:20px;background:#aedcae"></div>
<div style="left:964px;top:706px;width:1px;height:20px;background:#aedcae"></div>
<div style="left:1044px;top:706px;width:1px;height:20px;background:#aedcae"></div>
<div style="left:1089px;top:706px;width:1px;height:20px;background:#aedcae"></div>
<div style="left:1169px;top:706px;width:1px;height:20px;background:#aedcae"></div>
<div style="left:1249px;top:706px;width:1px;height:20px;background:#aedcae"></div>
<div style="left:1294px;top:706px;width:1px;height:20px;background:#aedcae"></div>
<div style="left:1374px;top:706px;width:1px;height:20px;background:#aedcae"></div>
<div style="left:1454px;top:706px;width:1px;height:20px;background:#aedcae"></div>
<div style="left:1499px;top:706px;width:1px;height:20px;background:#aedcae"></div>
<div style="left:1579px;top:706px;width:1px;height:20px;background:#aedcae"></div>
<div style="left:1659px;top:706px;width:1px;height:20px;background:#aedcae"></div>
<div style="left:1705px;top:706px;width:1px;height:20px;background:#aedcae"></div>
<div style="left:759px;top:748px;width:1px;height:20px;background:#aedcae"></div>
<div style="left:839px;top:748px;width:1px;height:20px;background:#aedcae"></div>
<div style="left:884px;top:748px;width:1px;height:20px;background:#aedcae"></div>
<div style="left:964px;top:748px;width:1px;height:20px;background:#aedcae"></div>
<div style="left:1044px;top:748px;width:1px;height:20px;background:#aedcae"></div>
<div style="left:1089px;top:748px;width:1px;height:20px;background:#aedcae"></div>
<div style="left:1169px;top:748px;width:1px;height:20px;background:#aedcae"></div>
<div style="left:1249px;top:748px;width:1px;height:20px;background:#aedcae"></div>
<div style="left:1294px;top:748px;width:1px;height:20px;background:#aedcae"></div>
<div style="left:1374px;top:748px;width:1px;height:20px;background:#aedcae"></div>
<div style="left:1454px;top:748px;width:1px;height:20px;background:#aedcae"></div>
<div style="left:1499px;top:748px;width:1px;height:20px;background:#aedcae"></div>
<div style="left:1579px;top:748px;width:1px;height:20px;background:#aedcae"></div>
<div style="left:1659px;top:748px;width:1px;height:20px;background:#aedcae"></div>
<div style="left:1705px;top:748px;width:1px;height:20px;background:#aedcae"></div>
<div style="left:759px;top:790px;width:1px;height:20px;background:#e5b2b2"></div>
<div style="left:839px;top:790px;width:1px;height:20px;background:#e5b2b2"></div>
<div style="left:884px;top:790px;width:1px;height:20px;background:#e5b2b2"></div>
<div style="left:964px;top:790px;width:1px;height:20px;background:#e5b2b2"></div>
<div style="left:1044px;top:790px;width:1px;height:20px;background:#e5b2b2"></div>
<div style="left:1089px;top:790px;width:1px;height:20px;background:#e5b2b2"></div>
<div style="left:1169px;top:790px;width:1px;height:20px;background:#e5b2b2"></div>
<div style="left:1249px;top:790px;width:1px;height:20px;background:#e5b2b2"></div>
<div style="left:1294px;top:790px;width:1px;height:20px;background:#e5b2b2"></div>
<div style="left:1374px;top:790px;width:1px;height:20px;background:#e5b2b2"></div>
<div style="left:1454px;top:790px;width:1px;height:20px;background:#e5b2b2"></div>
<div style="left:1499px;top:790px;width:1px;height:20px;background:#e5b2b2"></div>
<div style="left:1579px;top:790px;width:1px;height:20px;background:#aedcae"></div>
<div style="left:1659px;top:790px;width:1px;height:20px;background:#aedcae"></div>
<div style="left:1705px;top:790px;width:1px;height:20px;background:#aedcae"></div>
<div style="left:759px;top:895px;width:1px;height:20px;background:#cee2ce"></div>
<div style="left:839px;top:895px;width:1px;height:20px;background:#cee2ce"></div>
<div style="left:884px;top:895px;width:1px;height:20px;background:#cee2ce"></div>
<div style="left:964px;top:895px;width:1px;height:20px;background:#aedcae"></div>
<div style="left:1044px;top:895px;width:1px;height:20px;background:#aedcae"></div>
<div style="left:1089px;top:895px;width:1px;height:20px;background:#aedcae"></div>
<div style="left:1169px;top:895px;width:1px;height:20px;background:#aedcae"></div>
<div style="left:1249px;top:895px;width:1px;height:20px;background:#aedcae"></div>
<div style="left:1294px;top:895px;width:1px;height:20px;background:#aedcae"></div>
<div style="left:1374px;top:895px;width:1px;height:20px;background:#aedcae"></div>
<div style="left:1454px;top:895px;width:1px;height:20px;background:#aedcae"></div>
<div style="left:1499px;top:895px;width:1px;height:20px;background:#aedcae"></div>
<div style="left:1579px;top:895px;width:1px;height:20px;background:#aedcae"></div>
<div style="left:1659px;top:895px;width:1px;height:20px;background:#aedcae"></div>
<div style="left:1705px;top:895px;width:1px;height:20px;background:#aedcae"></div>
<div class="t" style="left:381px;top:248px;font-size:12px;line-height:12px;color:#404040;">Beschreibung</div>
<div class="t" style="left:682.5px;top:248px;width:200px;text-align:center;font-size:12px;line-height:12px;color:#404040;">2020/M9 [PT]</div>
<div class="t" style="left:887.5px;top:248px;width:200px;text-align:center;font-size:12px;line-height:12px;color:#404040;">2020/M10 [PT]</div>
<div class="t" style="left:1092.5px;top:248px;width:200px;text-align:center;font-size:12px;line-height:12px;color:#404040;">2020/M11 [PT]</div>
<div class="t" style="left:1297.5px;top:248px;width:200px;text-align:center;font-size:12px;line-height:12px;color:#404040;">2020/M12 [PT]</div>
<div class="t" style="left:1502.5px;top:248px;width:200px;text-align:center;font-size:12px;line-height:12px;color:#404040;">2021/M1 [PT]</div>
<div style="left:1904px;top:265px;width:16px;height:656px;background:#f0f0f0"></div>
<div style="left:1904px;top:282px;width:16px;height:571px;background:#c0c0c0"></div>
<svg style="position:absolute;left:1904px;top:266px" width="16" height="16" viewBox="0 0 16 16"><path d="M4 10 L8 6 L12 10" fill="none" stroke="#606060" stroke-width="1.6"/></svg>
<svg style="position:absolute;left:1904px;top:904px" width="16" height="16" viewBox="0 0 16 16"><path d="M4 6 L8 10 L12 6" fill="none" stroke="#606060" stroke-width="1.6"/></svg>
<div style="left:0px;top:922px;width:1920px;height:54px;background:#fff"></div>
<div class="t" style="left:12px;top:944px;font-size:12px;line-height:12px;color:#1e1e1e;">Projekt</div>
<div style="left:77px;top:939px;width:200px;height:20px;border:1px solid #a8a8a8;box-sizing:border-box;background:#fff;"></div>
<div style="left:242px;top:941px;width:16px;height:16px;border:1px solid #a8a8a8;box-sizing:border-box;background:linear-gradient(#f3f3f3,#e3e3e3);"></div>
<svg style="position:absolute;left:242px;top:941px" width="16" height="16" viewBox="0 0 16 16"><path d="M4.0 4.0 L12.0 12.0 M12.0 4.0 L4.0 12.0" fill="none" stroke="#505050" stroke-width="1.2"/></svg>
<div style="left:259px;top:941px;width:16px;height:16px;border:1px solid #a8a8a8;box-sizing:border-box;background:linear-gradient(#f3f3f3,#e3e3e3);"></div>
<svg style="position:absolute;left:259px;top:941px" width="16" height="16" viewBox="0 0 16 16"><path d="M3.5 5.5 L8.0 10.0 L12.5 5.5" fill="none" stroke="#606060" stroke-width="1.3"/></svg>
<div style="left:1851px;top:934px;width:30px;height:30px;border:1px solid #b9cde0;box-sizing:border-box;background:#dbeaf8;"></div>
<svg style="position:absolute;left:1851px;top:934px" width="30" height="30" viewBox="0 0 30 30"><path d="M14 6 H22 V24 H14 Z" fill="#fff" stroke="#217346" stroke-width="1"/><path d="M15 10 H21 M15 13 H21 M15 16 H21 M15 19 H21 M18 7 V23" stroke="#217346" stroke-width="0.9"/><path d="M5 8 L15 5.5 V24.5 L5 22 Z" fill="#217346"/><path d="M7.3 11 L11.8 19 M11.8 11 L7.3 19" stroke="#fff" stroke-width="1.5"/></svg>
<div style="left:1885px;top:934px;width:32px;height:30px;border:1px solid #dcdcdc;box-sizing:border-box;background:#f5f5f5;"></div>
<div class="t" style="left:1894px;top:944px;font-size:12px;line-height:12px;color:#000;">OK</div>
<div style="left:0px;top:976px;width:1920px;height:20px;background:#819b91"></div>
<div class="t" style="left:5px;top:981px;font-size:11px;line-height:11px;font-weight:bold;letter-spacing:-0.25px;color:#f4f4f4;">0 von 34</div>
<div class="t" style="left:60px;top:981px;font-size:11px;line-height:11px;font-weight:bold;letter-spacing:-0.25px;color:#f4f4f4;">Letzte Aktualisierung: 23.09.2020 11:00</div>
<div style="left:0px;top:996px;width:1920px;height:40px;background:linear-gradient(90deg,#001b25 0%,#011a24 30%,#020f20 75%,#040b1e 100%)"></div>
<svg style="position:absolute;left:15px;top:1007px" width="18" height="18" viewBox="0 0 18 18"><path d="M0 2.4 L7.3 1.4 V8.3 H0 Z M8.2 1.3 L17 0 V8.3 H8.2 Z M0 9.2 H7.3 V16.1 L0 15.1 Z M8.2 9.2 H17 V17.5 L8.2 16.2 Z" fill="#fff"/></svg>
<svg style="position:absolute;left:63px;top:1007px" width="18" height="18" viewBox="0 0 18 18"><path d="M1.5 3.5 H12.5 V13.5 H1.5 Z" fill="none" stroke="#fff" stroke-width="1.2"/><path d="M1 1 H13 M1 16 H13" stroke="#fff" stroke-width="1.2"/><path d="M15.5 1 V6 M15.5 8 V16" stroke="#fff" stroke-width="1.3"/></svg>
<svg style="position:absolute;left:112px;top:1003px" width="24" height="26" viewBox="0 0 24 26"><path d="M4 3.5 A8 8 0 1 1 16 18.5" fill="none" stroke="#d9431e" stroke-width="2.2"/><path d="M4 3 Q3 8 4.5 13" fill="none" stroke="#d9431e" stroke-width="2"/><path d="M12 2 V18" stroke="#e8e8e8" stroke-width="1.6"/><path d="M17 11 L11.5 18" stroke="#bdbdbd" stroke-width="1.8"/><circle cx="6.5" cy="20" r="2.6" fill="none" stroke="#1e88e5" stroke-width="1.9"/><circle cx="13" cy="22.6" r="2.6" fill="none" stroke="#29a9f0" stroke-width="1.9"/></svg>
<svg style="position:absolute;left:160px;top:1004px" width="24" height="24" viewBox="0 0 24 24"><circle cx="12" cy="12" r="11.2" fill="#db4437"/><path d="M12 12 L2.3 6.4 A11.2 11.2 0 0 0 12 23.2 Z" fill="#0f9d58"/><path d="M12 12 L12 23.2 A11.2 11.2 0 0 0 21.7 6.4 Z" fill="#ffcd40"/><circle cx="12" cy="12" r="5.3" fill="#fff"/><circle cx="12" cy="12" r="4.2" fill="#4285f4"/></svg>
<svg style="position:absolute;left:210px;top:1006px" width="23" height="19" viewBox="0 0 23 19"><path d="M0.5 1 H8 L10 3 H21.5 V18.5 H0.5 Z" fill="#f0c24a"/><path d="M0.5 5 H21.5 V18.5 H0.5 Z" fill="#ffd866"/><path d="M5 13 H17 V18.5 H14 V16 H8 V18.5 H5 Z" fill="#3b9de0"/></svg>
<div style="left:152px;top:1034px;width:40px;height:2px;background:#76b9ed"></div>
<div style="left:246px;top:996px;width:48px;height:40px;background:#2e3f4c"></div>
<div style="left:246px;top:1034px;width:48px;height:2px;background:#76b9ed"></div>
<div style="left:290px;top:996px;width:1px;height:38px;background:#1e2a33"></div>
<svg style="position:absolute;left:258px;top:1004px" width="24" height="24" viewBox="0 0 24 24"><circle cx="12" cy="12" r="12" fill="#f39200"/><path d="M12 7 V23" stroke="#3a3ca0" stroke-width="1.5"/><path d="M7 12 L12 7 L17 12" fill="none" stroke="#3a3ca0" stroke-width="1.5"/></svg>
<svg style="position:absolute;left:1660px;top:1007px" width="18" height="18" viewBox="0 0 18 18"><circle cx="11" cy="4.3" r="2.7" fill="none" stroke="#fff" stroke-width="1.1"/><path d="M6.5 13 Q7 8 11 8 Q15 8 15.5 12" fill="none" stroke="#fff" stroke-width="1.1"/><circle cx="5.5" cy="8.8" r="2.7" fill="none" stroke="#fff" stroke-width="1.1"/><path d="M1 17 Q1.5 12.5 5.5 12.5 Q9.5 12.5 10 17" fill="none" stroke="#fff" stroke-width="1.1"/></svg>
<svg style="position:absolute;left:1698px;top:1010px" width="15" height="10" viewBox="0 0 15 10"><path d="M1 8.5 L7 2.5 L13 8.5" fill="none" stroke="#fff" stroke-width="1.2"/></svg>
<svg style="position:absolute;left:1720px;top:1008px" width="18" height="16" viewBox="0 0 18 16"><rect x="4.5" y="2.5" width="12" height="9" fill="none" stroke="#fff"/><path d="M10.5 11.5 V14.5 M6 14.5 H15 M1.5 1 V14" stroke="#fff"/><rect x="0.5" y="0.5" width="4" height="3" fill="none" stroke="#fff"/></svg>
<svg style="position:absolute;left:1744px;top:1008px" width="18" height="15" viewBox="0 0 18 15"><path d="M1.5 5 H4.5 L8.5 1.5 V13.5 L4.5 10 H1.5 Z" fill="none" stroke="#fff"/><path d="M11 5 Q12 7.5 11 10 M13.3 3.5 Q15 7.5 13.3 11.5 M15.6 2 Q18 7.5 15.6 13" fill="none" stroke="#fff"/></svg>
<div class="t" style="left:1772px;top:1010px;font-size:12px;line-height:12px;color:#fff;">DEU</div>
<div class="t" style="left:1803.5px;top:1001px;width:60px;text-align:center;font-size:12px;line-height:12px;color:#fff;">11:55</div>
<div class="t" style="left:1794.0px;top:1019px;width:80px;text-align:center;font-size:12px;line-height:12px;color:#fff;">23.09.2020</div>
<svg style="position:absolute;left:1876px;top:1005px" width="34" height="30" viewBox="0 0 34 30"><path d="M3.5 3.5 H19.5 V15.5 H9 L6 18.5 V15.5 H3.5 Z" fill="#fff"/><path d="M6 7 H17 M6 9.5 H17 M6 12 H14" stroke="#05192a" stroke-width="1"/><circle cx="18.5" cy="18" r="7.5" fill="#2b2b2b" stroke="#777" stroke-width="1"/><text x="18.5" y="22" font-family="Liberation Sans" font-size="11" font-weight="bold" fill="#fff" text-anchor="middle">2</text></svg>
<div style="left:1915px;top:996px;width:1px;height:40px;background:#3a4650"></div>
</body></html>
